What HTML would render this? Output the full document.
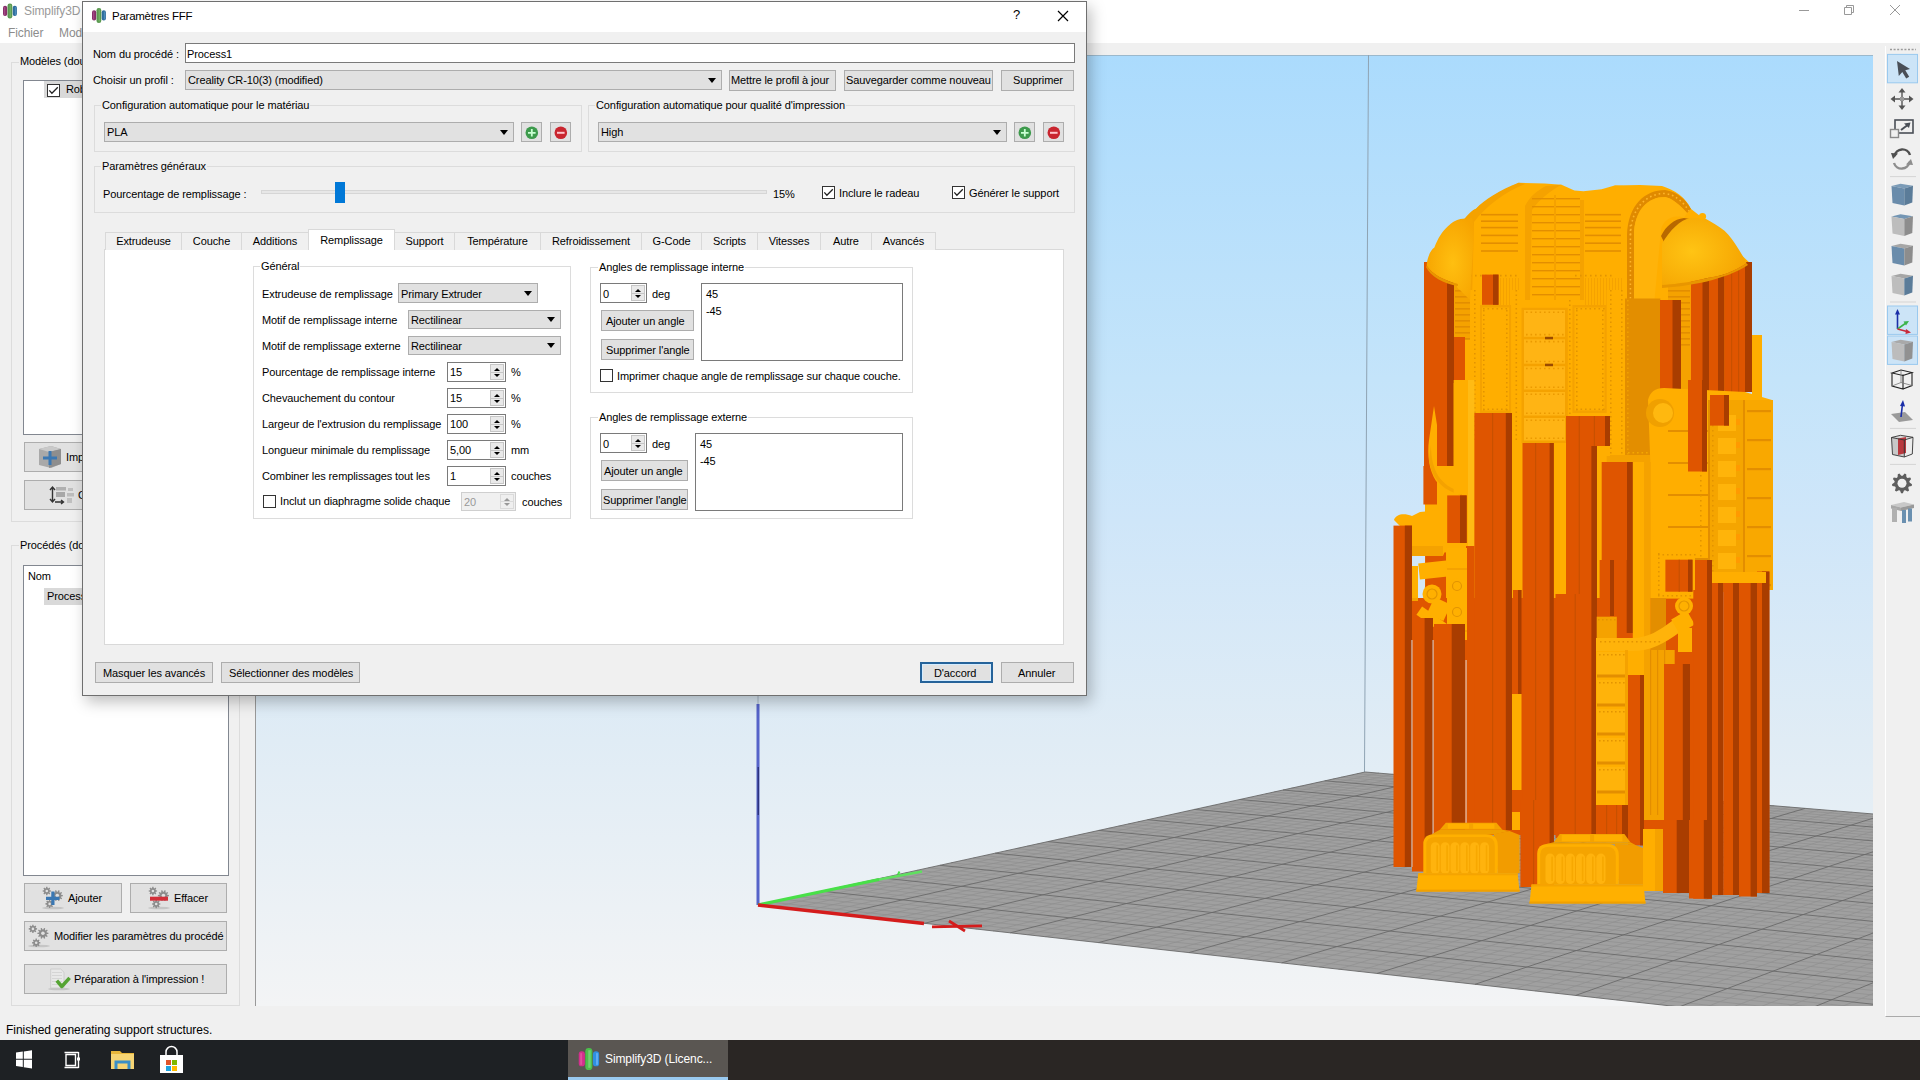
<!DOCTYPE html>
<html><head><meta charset="utf-8">
<style>
*{box-sizing:border-box;margin:0;padding:0}
html,body{width:1920px;height:1080px;overflow:hidden;background:#f0f0f0;font-family:"Liberation Sans",sans-serif;font-size:11px;letter-spacing:-0.1px;color:#000}
.a{position:absolute}
.t{position:absolute;white-space:nowrap;line-height:14px}
.btn{position:absolute;background:#e1e1e1;border:1px solid #adadad;text-align:center;white-space:nowrap}
.cmb{position:absolute;background:#e1e1e1;border:1px solid #adadad;white-space:nowrap}
.inp{position:absolute;background:#fff;border:1px solid #7a7a7a;white-space:nowrap}
.grp{position:absolute;border:1px solid #dcdcdc}
.arr{position:absolute;width:0;height:0;border-left:4px solid transparent;border-right:4px solid transparent;border-top:5px solid #000}
.chk{position:absolute;width:13px;height:13px;border:1px solid #333;background:#fff}
.spin{position:absolute;background:#fff;border:1px solid #7a7a7a}
.spin .ud{position:absolute;right:1px;top:1px;bottom:1px;width:14px;background:#e9e9e9;border:1px solid #c6c6c6}
.spin .ud:before{content:"";position:absolute;left:3px;top:2.5px;border-left:3px solid transparent;border-right:3px solid transparent;border-bottom:3.5px solid #000}
.spin .ud:after{content:"";position:absolute;left:3px;bottom:2.5px;border-left:3px solid transparent;border-right:3px solid transparent;border-top:3.5px solid #000}
.spin .ud i{position:absolute;left:0;right:0;top:50%;margin-top:-0.5px;height:1px;background:#c6c6c6}
.spin.dis .ud:before{border-bottom-color:#999}.spin.dis .ud:after{border-top-color:#999}
.ck svg{position:absolute;left:-1px;top:-1px}
.pm{}
.dot{position:absolute;left:4px;top:3px;width:12px;height:12px;border-radius:50%}
.dot.g{background:#3cb043}
.dot.r{background:#e02020}
.lb{position:absolute;background:#fff;border:1px solid #828790}
</style></head>
<body>
<!-- ===== main window ===== -->
<div class="a" style="left:0;top:0;width:1920px;height:43px;background:#fff"></div>
<div class="t" style="left:24px;top:4px;font-size:12px;color:#999">Simplify3D</div>
<div class="t" style="left:8px;top:26px;font-size:12px;color:#8c8c8c">Fichier</div>
<div class="t" style="left:59px;top:26px;font-size:12px;color:#8c8c8c">Mod</div>
<svg class="a" style="left:3px;top:3px" width="14" height="16" viewBox="0 0 14 15">
<rect x="0" y="2.3" width="4.2" height="10.2" rx="2" fill="#86306a"/><rect x="1" y="3.5" width="1.3" height="8" fill="#c060a0" opacity="0.5"/>
<rect x="9.7" y="2.3" width="4.2" height="10.2" rx="2" fill="#2e6d9c"/><rect x="11.8" y="3.5" width="1.3" height="8" fill="#60a0d0" opacity="0.6"/>
<rect x="4.5" y="0" width="4.8" height="15" rx="2.3" fill="#5a9850"/><rect x="6.5" y="1.5" width="1.6" height="12" fill="#80c070" opacity="0.6"/>
</svg>
<svg class="a" style="left:1795px;top:3px" width="110" height="16"><path d="M4 7.5h10" stroke="#999" stroke-width="1"/><path d="M49.5 4.5h7v7h-7zM51.5 4.5v-2h7v7h-2" stroke="#999" fill="none" stroke-width="1"/><path d="M95 2l10 10M105 2l-10 10" stroke="#999" stroke-width="1"/></svg>

<!-- left panel -->
<div class="grp" style="left:11px;top:62px;width:229px;height:460px"></div>
<div class="t" style="left:19px;top:54px;background:#f0f0f0;padding:0 1px">Modèles (double-clic)</div>
<div class="lb" style="left:23px;top:80px;width:206px;height:355px"></div>
<div class="a" style="left:44px;top:81px;width:180px;height:17px;background:#d9d9d9"></div>
<div class="chk ck" style="left:47px;top:84px"><svg width="13" height="13"><path d="M2.3 6.4L4.9 9.2L10.8 3.3" stroke="#222" stroke-width="1.3" fill="none"/></svg></div>
<div class="t" style="left:66px;top:82px">Robot</div>
<div class="btn" style="left:24px;top:442px;width:204px;height:30px"></div>
<div class="btn" style="left:24px;top:480px;width:204px;height:30px"></div>
<div class="t" style="left:66px;top:450px">Importer</div>
<div class="t" style="left:78px;top:488px">Centrer et arranger</div>

<div class="grp" style="left:11px;top:545px;width:229px;height:461px"></div>
<div class="t" style="left:19px;top:538px;background:#f0f0f0;padding:0 1px">Procédés (double-clic)</div>
<div class="lb" style="left:23px;top:565px;width:206px;height:311px"></div>
<div class="t" style="left:28px;top:569px">Nom</div>
<div class="a" style="left:44px;top:588px;width:180px;height:17px;background:#d9d9d9"></div>
<div class="t" style="left:47px;top:589px">Process1</div>
<div class="btn" style="left:24px;top:883px;width:98px;height:30px"></div>
<div class="t" style="left:68px;top:891px">Ajouter</div>
<div class="btn" style="left:130px;top:883px;width:97px;height:30px"></div>
<div class="t" style="left:174px;top:891px">Effacer</div>
<div class="btn" style="left:24px;top:921px;width:203px;height:30px"></div>
<div class="t" style="left:54px;top:929px">Modifier les paramètres du procédé</div>
<div class="btn" style="left:24px;top:964px;width:203px;height:30px"></div>
<div class="t" style="left:74px;top:972px">Préparation à l'impression !</div>

<svg class="a" style="left:0;top:0" width="260" height="1010"><ellipse cx="53.0" cy="908.0" rx="11" ry="1.3" fill="#000" opacity="0.12"/><ellipse cx="159.0" cy="908.0" rx="11" ry="1.3" fill="#000" opacity="0.12"/><ellipse cx="39.0" cy="946.0" rx="11" ry="1.3" fill="#000" opacity="0.12"/><ellipse cx="59.0" cy="989.0" rx="11" ry="1.3" fill="#000" opacity="0.12"/><polygon points="51.0,890.4 51.0,891.6 49.7,891.8 49.4,892.5 50.2,893.5 49.3,894.4 48.3,893.6 47.6,893.9 47.4,895.2 46.2,895.2 46.0,893.9 45.3,893.6 44.3,894.4 43.4,893.5 44.2,892.5 43.9,891.8 42.6,891.6 42.6,890.4 43.9,890.2 44.2,889.5 43.4,888.5 44.3,887.6 45.3,888.4 46.0,888.1 46.2,886.8 47.4,886.8 47.6,888.1 48.3,888.4 49.3,887.6 50.2,888.5 49.4,889.5 49.7,890.2" fill="#8c8c8c"/><circle cx="46.8" cy="891.0" r="1.3" fill="#e1e1e1"/><polygon points="62.8,895.0 62.8,896.2 61.2,896.4 60.9,897.2 62.1,898.3 61.4,899.3 60.0,898.5 59.3,899.0 59.6,900.6 58.4,901.0 57.7,899.5 56.9,899.5 56.2,901.0 55.0,900.6 55.3,899.0 54.6,898.5 53.2,899.3 52.5,898.3 53.7,897.2 53.4,896.4 51.8,896.2 51.8,895.0 53.4,894.8 53.7,894.0 52.5,892.9 53.2,891.9 54.6,892.7 55.3,892.2 55.0,890.6 56.2,890.2 56.9,891.7 57.7,891.7 58.4,890.2 59.6,890.6 59.3,892.2 60.0,892.7 61.4,891.9 62.1,892.9 60.9,894.0 61.2,894.8" fill="#8c8c8c"/><circle cx="57.3" cy="895.6" r="1.8" fill="#e1e1e1"/><polygon points="53.8,903.3 53.8,904.5 52.5,904.7 52.2,905.4 53.0,906.4 52.1,907.3 51.1,906.5 50.4,906.8 50.2,908.1 49.0,908.1 48.8,906.8 48.1,906.5 47.1,907.3 46.2,906.4 47.0,905.4 46.7,904.7 45.4,904.5 45.4,903.3 46.7,903.1 47.0,902.4 46.2,901.4 47.1,900.5 48.1,901.3 48.8,901.0 49.0,899.7 50.2,899.7 50.4,901.0 51.1,901.3 52.1,900.5 53.0,901.4 52.2,902.4 52.5,903.1" fill="#8c8c8c"/><circle cx="49.6" cy="903.9" r="1.3" fill="#e1e1e1"/><path d="M52.9 891.5v13.5M46 898.3h13.5" stroke="#3b78b3" stroke-width="3.2"/><polygon points="157.1,890.4 157.1,891.6 155.8,891.8 155.5,892.5 156.3,893.5 155.4,894.4 154.4,893.6 153.7,893.9 153.5,895.2 152.3,895.2 152.1,893.9 151.4,893.6 150.4,894.4 149.5,893.5 150.3,892.5 150.0,891.8 148.7,891.6 148.7,890.4 150.0,890.2 150.3,889.5 149.5,888.5 150.4,887.6 151.4,888.4 152.1,888.1 152.3,886.8 153.5,886.8 153.7,888.1 154.4,888.4 155.4,887.6 156.3,888.5 155.5,889.5 155.8,890.2" fill="#8c8c8c"/><circle cx="152.9" cy="891.0" r="1.3" fill="#e1e1e1"/><polygon points="168.9,895.0 168.9,896.2 167.3,896.4 167.0,897.2 168.2,898.3 167.5,899.3 166.1,898.5 165.4,899.0 165.7,900.6 164.5,901.0 163.8,899.5 163.0,899.5 162.3,901.0 161.1,900.6 161.4,899.0 160.7,898.5 159.3,899.3 158.6,898.3 159.8,897.2 159.5,896.4 157.9,896.2 157.9,895.0 159.5,894.8 159.8,894.0 158.6,892.9 159.3,891.9 160.7,892.7 161.4,892.2 161.1,890.6 162.3,890.2 163.0,891.7 163.8,891.7 164.5,890.2 165.7,890.6 165.4,892.2 166.1,892.7 167.5,891.9 168.2,892.9 167.0,894.0 167.3,894.8" fill="#8c8c8c"/><circle cx="163.4" cy="895.6" r="1.8" fill="#e1e1e1"/><polygon points="160.4,903.4 160.4,904.6 159.1,904.8 158.8,905.5 159.6,906.5 158.7,907.4 157.7,906.6 157.0,906.9 156.8,908.2 155.6,908.2 155.4,906.9 154.7,906.6 153.7,907.4 152.8,906.5 153.6,905.5 153.3,904.8 152.0,904.6 152.0,903.4 153.3,903.2 153.6,902.5 152.8,901.5 153.7,900.6 154.7,901.4 155.4,901.1 155.6,899.8 156.8,899.8 157.0,901.1 157.7,901.4 158.7,900.6 159.6,901.5 158.8,902.5 159.1,903.2" fill="#8c8c8c"/><circle cx="156.2" cy="904.0" r="1.3" fill="#e1e1e1"/><rect x="150" y="896.7" width="18" height="4" fill="#d2303a"/><polygon points="37.1,928.3 37.1,929.5 35.8,929.7 35.5,930.4 36.3,931.4 35.4,932.3 34.4,931.5 33.7,931.8 33.5,933.1 32.3,933.1 32.1,931.8 31.4,931.5 30.4,932.3 29.5,931.4 30.3,930.4 30.0,929.7 28.7,929.5 28.7,928.3 30.0,928.1 30.3,927.4 29.5,926.4 30.4,925.5 31.4,926.3 32.1,926.0 32.3,924.7 33.5,924.7 33.7,926.0 34.4,926.3 35.4,925.5 36.3,926.4 35.5,927.4 35.8,928.1" fill="#8c8c8c"/><circle cx="32.9" cy="928.9" r="1.3" fill="#e1e1e1"/><polygon points="48.4,932.7 48.4,933.9 46.8,934.1 46.5,934.9 47.7,936.0 47.0,937.0 45.6,936.2 44.9,936.7 45.2,938.3 44.0,938.7 43.3,937.2 42.5,937.2 41.8,938.7 40.6,938.3 40.9,936.7 40.2,936.2 38.8,937.0 38.1,936.0 39.3,934.9 39.0,934.1 37.4,933.9 37.4,932.7 39.0,932.5 39.3,931.7 38.1,930.6 38.8,929.6 40.2,930.4 40.9,929.9 40.6,928.3 41.8,927.9 42.5,929.4 43.3,929.4 44.0,927.9 45.2,928.3 44.9,929.9 45.6,930.4 47.0,929.6 47.7,930.6 46.5,931.7 46.8,932.5" fill="#8c8c8c"/><circle cx="42.9" cy="933.3" r="1.8" fill="#e1e1e1"/><polygon points="40.4,942.2 40.4,943.4 39.1,943.6 38.8,944.3 39.6,945.3 38.7,946.2 37.7,945.4 37.0,945.7 36.8,947.0 35.6,947.0 35.4,945.7 34.7,945.4 33.7,946.2 32.8,945.3 33.6,944.3 33.3,943.6 32.0,943.4 32.0,942.2 33.3,942.0 33.6,941.3 32.8,940.3 33.7,939.4 34.7,940.2 35.4,939.9 35.6,938.6 36.8,938.6 37.0,939.9 37.7,940.2 38.7,939.4 39.6,940.3 38.8,941.3 39.1,942.0" fill="#8c8c8c"/><circle cx="36.2" cy="942.8" r="1.3" fill="#e1e1e1"/><path d="M50.7 969h10l3.3 3.3V988H50.7z" fill="#e8e8e8" stroke="#c8c8c8" stroke-width="0.8"/><path d="M52 972.5h10" stroke="#cfcfcf" stroke-width="0.8"/><path d="M52 975.5h10" stroke="#cfcfcf" stroke-width="0.8"/><path d="M52 978.5h10" stroke="#cfcfcf" stroke-width="0.8"/><path d="M52 981.5h10" stroke="#cfcfcf" stroke-width="0.8"/><path d="M52 984.5h10" stroke="#cfcfcf" stroke-width="0.8"/><path d="M56.8 980.6L61.8 986.5L69.6 977.8" stroke="#55a433" stroke-width="3.5" fill="none" stroke-linejoin="round"/><path d="M39 449l12-3 10 3v15l-10 4-12-3z" fill="#a9a9a9"/><path d="M39 449l10 3 12-3-10-3z" fill="#c9c9c9"/><path d="M49 452v16l12-4V449z" fill="#8e8e8e"/><path d="M50 451v14M43 458h14" stroke="#3b78b3" stroke-width="3"/><path d="M52.5 487v15M50 490l2.5-3 2.5 3M50 499l2.5 3 2.5-3" stroke="#333" stroke-width="1.4" fill="none"/><rect x="56" y="487" width="10" height="3.5" fill="#b0b0b0"/><rect x="56" y="492" width="9" height="5" fill="#a8a8a8"/><rect x="68" y="488" width="5" height="3" fill="#c0c0c0"/><rect x="67" y="493" width="7" height="3.5" fill="#bdbdbd"/><rect x="67" y="498" width="5" height="5" fill="#c0c0c0"/><path d="M55 502h8M61 500l2.5 2-2.5 2" stroke="#333" stroke-width="1.4" fill="none"/></svg>
<!-- viewport -->
<div id="vp" class="a" style="left:255px;top:55px;width:1618px;height:951px;background:linear-gradient(#abdbfd,#c4e4fa 34%,#cfe6f9 49%,#e0ecf5 72%,#f3f4f5);border-left:1px solid #999;border-top:1px solid #9bb8cc"></div>

<!--SCENE--><svg class="a" style="left:0;top:0" width="1920" height="1080" viewBox="0 0 1920 1080">
<defs><clipPath id="vpc"><rect x="256" y="55" width="1617" height="951"/></clipPath></defs>
<g clip-path="url(#vpc)">
<line x1="1368.5" y1="55" x2="1364.5" y2="772" stroke="#8fa3b3" stroke-width="1"/>
<polygon points="759.0,905.0 1365.1,772.0 2520.7,867.5 2171.6,1061.4" fill="#a0a0a0"/>
<path d="M775.2 906.8L1378.9 773.1M791.4 908.6L1392.8 774.3M807.8 910.4L1406.8 775.4M824.2 912.2L1420.8 776.6M857.3 915.9L1448.9 778.9M873.9 917.7L1463.1 780.1M890.7 919.6L1477.3 781.3M907.5 921.4L1491.6 782.4M941.4 925.2L1520.4 784.8M958.5 927.1L1534.8 786.0M975.7 929.0L1549.3 787.2M993.0 930.9L1563.9 788.4M1027.8 934.7L1593.2 790.8M1045.3 936.7L1607.9 792.1M1062.9 938.6L1622.7 793.3M1080.6 940.6L1637.6 794.5M1116.3 944.6L1667.5 797.0M1134.3 946.5L1682.5 798.2M1152.4 948.5L1697.6 799.5M1170.6 950.6L1712.8 800.7M1207.2 954.6L1743.3 803.2M1225.7 956.7L1758.7 804.5M1244.3 958.7L1774.1 805.8M1262.9 960.8L1789.5 807.1M1300.6 964.9L1820.7 809.6M1319.5 967.0L1836.3 810.9M1338.6 969.2L1852.1 812.2M1357.8 971.3L1867.9 813.6M1396.4 975.6L1899.7 816.2M1415.9 977.7L1915.7 817.5M1435.5 979.9L1931.7 818.8M1455.2 982.1L1947.8 820.2M1494.9 986.5L1980.3 822.8M1515.0 988.7L1996.6 824.2M1535.1 990.9L2013.0 825.6M1555.3 993.1L2029.5 826.9M1596.2 997.7L2062.7 829.7M1616.8 999.9L2079.3 831.0M1637.5 1002.2L2096.1 832.4M1658.3 1004.5L2112.9 833.8M1700.3 1009.2L2146.8 836.6M1721.4 1011.5L2163.8 838.0M1742.7 1013.9L2180.9 839.4M1764.1 1016.3L2198.1 840.9M1807.3 1021.0L2232.7 843.7M1829.1 1023.4L2250.1 845.2M1851.0 1025.9L2267.6 846.6M1873.1 1028.3L2285.2 848.1M1917.5 1033.2L2320.5 851.0M1939.9 1035.7L2338.3 852.5M1962.5 1038.2L2356.2 853.9M1985.2 1040.7L2374.2 855.4M2030.9 1045.8L2410.3 858.4M2054.0 1048.3L2428.5 859.9M2077.3 1050.9L2446.8 861.4M2100.6 1053.5L2465.1 862.9M2147.8 1058.7L2502.1 866.0M2171.6 1061.4L2520.7 867.5M771.8 902.2L2179.3 1057.1M784.5 899.4L2186.9 1052.8M797.1 896.6L2194.5 1048.6M809.6 893.9L2202.0 1044.5M834.3 888.5L2216.7 1036.3M846.4 885.8L2223.9 1032.3M858.5 883.2L2231.1 1028.3M870.4 880.6L2238.1 1024.4M894.0 875.4L2252.1 1016.6M905.6 872.8L2258.9 1012.8M917.1 870.3L2265.7 1009.1M928.5 867.8L2272.5 1005.3M951.1 862.8L2285.7 998.0M962.2 860.4L2292.2 994.4M973.3 858.0L2298.6 990.8M984.2 855.6L2305.0 987.3M1005.8 850.8L2317.6 980.3M1016.5 848.5L2323.8 976.8M1027.1 846.2L2329.9 973.4M1037.6 843.9L2336.0 970.1M1058.3 839.3L2348.0 963.4M1068.6 837.1L2353.9 960.1M1078.7 834.8L2359.7 956.9M1088.8 832.6L2365.5 953.7M1108.7 828.2L2376.9 947.4M1118.5 826.1L2382.5 944.2M1128.3 823.9L2388.1 941.2M1138.0 821.8L2393.6 938.1M1157.1 817.6L2404.4 932.1M1166.5 815.6L2409.8 929.1M1175.9 813.5L2415.1 926.1M1185.2 811.5L2420.4 923.2M1203.6 807.4L2430.7 917.5M1212.7 805.4L2435.9 914.6M1221.7 803.4L2440.9 911.8M1230.7 801.5L2446.0 909.0M1248.4 797.6L2455.9 903.5M1257.1 795.7L2460.8 900.8M1265.8 793.8L2465.6 898.1M1274.4 791.9L2470.4 895.4M1291.4 788.1L2479.9 890.1M1299.9 786.3L2484.6 887.5M1308.2 784.5L2489.3 885.0M1316.5 782.6L2493.9 882.4M1332.9 779.0L2503.0 877.4M1341.1 777.2L2507.4 874.9M1349.1 775.5L2511.9 872.4M1357.1 773.7L2516.3 870.0" stroke="#8f8f8f" stroke-width="0.7" fill="none"/>
<path d="M759.0 905.0L1365.1 772.0M840.7 914.0L1434.8 777.7M924.4 923.3L1506.0 783.6M1010.3 932.8L1578.5 789.6M1098.4 942.6L1652.5 795.7M1188.9 952.6L1728.0 802.0M1281.7 962.9L1805.1 808.4M1377.1 973.4L1883.7 814.9M1475.0 984.3L1964.0 821.5M1575.7 995.4L2046.0 828.3M1679.2 1006.9L2129.8 835.2M1785.7 1018.6L2215.4 842.3M1895.2 1030.8L2302.8 849.5M2008.0 1043.2L2392.2 856.9M2124.1 1056.1L2483.6 864.5M759.0 905.0L2171.6 1061.4M822.0 891.2L2209.4 1040.4M882.2 878.0L2245.2 1020.5M939.9 865.3L2279.1 1001.6M995.1 853.2L2311.3 983.7M1048.0 841.6L2342.0 966.7M1098.8 830.4L2371.2 950.5M1147.6 819.7L2399.0 935.1M1194.4 809.4L2425.6 920.3M1239.5 799.5L2451.0 906.2M1283.0 790.0L2475.2 892.8M1324.8 780.8L2498.4 879.9M1365.1 772.0L2520.7 867.5" stroke="#6a6a6a" stroke-width="0.9" fill="none"/>
<line x1="758" y1="704" x2="758" y2="905" stroke="#5563c9" stroke-width="3"/>
<line x1="758.2" y1="767" x2="758.2" y2="815" stroke="#1c1f5c" stroke-width="1"/><line x1="758" y1="695" x2="758" y2="704" stroke="#a8b8c8" stroke-width="1"/>
<path d="M758 905L879 879.5" stroke="#48e048" stroke-width="3.2"/><path d="M879 879.5L922 871.5" stroke="#5fe05f" stroke-width="2.4"/><path d="M898 874.5l1.5 -3" stroke="#48e048" stroke-width="2"/>
<line x1="758" y1="905" x2="924" y2="923.5" stroke="#d41c1c" stroke-width="3.5"/>
<path d="M932 926.8L982 925.8M949 921L965 931" stroke="#d41c1c" stroke-width="2.8"/>
</g>
<g id="robot">
<defs><radialGradient id="domeL" cx="0.55" cy="0.55" r="0.6"><stop offset="0" stop-color="#ffbf10"/><stop offset="1" stop-color="#f7a400"/></radialGradient><radialGradient id="domeR" cx="0.35" cy="0.5" r="0.7"><stop offset="0" stop-color="#ffc414"/><stop offset="1" stop-color="#f5a300"/></radialGradient></defs>
<path d="M1462 300 L1462 222 L1476 208.7 L1492.8 195.7 L1518.7 182.8 L1544.6 183.4 L1561.5 184.7 L1574.4 190.6 L1583.5 191.2 L1601.6 189.3 L1614.6 185.4 L1640 185 L1662 186 C1675 190 1686 198 1690.8 208.7 L1700 216 L1752 265 L1752 390 L1660 390 L1660 600 L1425 600 L1425 300 Z" fill="#ffae00"/>
<rect x="1412.0" y="598.0" width="288.0" height="237.0" fill="#df5500"/>
<path d="M1462 300 L1462 222 C1468 214 1472 210 1476 208.7 C1484 200 1500 190 1518.7 182.8 L1525 184 C1505 192 1486 206 1474 222 L1472 300 Z" fill="#f5a200"/>
<path d="M1525 206 C1530 196 1538 190 1546 186 L1561.5 184.7 C1552 190 1540 198 1532 210 L1530 300 L1525 300 Z" fill="#f5a200"/>
<rect x="1580.0" y="200.0" width="4.0" height="100.0" fill="#f5a200"/>
<path d="M1614.6 185.4 C1640 186 1662 190 1690.8 208.7 L1693 214 L1665 206 L1634 204 L1627 210 L1627 300 L1617 300 L1617 200 Z" fill="#ffae00"/>
<path d="M1627 300 L1627 235 C1628 205 1645 190 1665 190 C1678 192 1686 200 1691 209 L1687 213 C1680 205 1672 198 1665 197 C1648 197 1634 210 1634 236 L1634 300 Z" fill="#e08a00"/>
<path d="M1634 300 L1634 236 C1634 210 1648 197 1665 197 C1672 198 1680 205 1687 213 L1684 218 C1672 213 1662 222 1661 230 L1654.5 300 Z" fill="#ffb30a"/>
<path d="M1661 236 C1666 226 1674 219 1684 218 L1690 219 C1680 225 1672 235 1668 250 Z" fill="#b86800"/>
<path d="M1629.6 225.0h1.6v1.6h-1.6zM1629.6 229.5h1.6v1.6h-1.6zM1629.6 234.0h1.6v1.6h-1.6zM1629.6 238.5h1.6v1.6h-1.6zM1629.6 243.0h1.6v1.6h-1.6zM1629.6 247.5h1.6v1.6h-1.6zM1629.6 252.0h1.6v1.6h-1.6zM1629.6 256.5h1.6v1.6h-1.6zM1629.6 261.0h1.6v1.6h-1.6zM1629.6 265.5h1.6v1.6h-1.6zM1629.6 270.0h1.6v1.6h-1.6zM1629.6 274.5h1.6v1.6h-1.6zM1629.6 279.0h1.6v1.6h-1.6zM1629.6 283.5h1.6v1.6h-1.6zM1629.6 288.0h1.6v1.6h-1.6zM1629.6 292.5h1.6v1.6h-1.6zM1629.6 297.0h1.6v1.6h-1.6z" fill="#ffb62a"/>
<path d="M1630.5 235 C1631 207 1647 193.5 1665 193.5 C1676 195 1683 202 1689 211" fill="none" stroke="#ffb62a" stroke-width="1.6" stroke-dasharray="1.6 2.9"/>
<path d="M1470.0 274.8h1.6v1.6h-1.6zM1475.0 274.8h1.6v1.6h-1.6zM1480.0 274.8h1.6v1.6h-1.6zM1485.0 274.8h1.6v1.6h-1.6zM1490.0 274.8h1.6v1.6h-1.6zM1495.0 274.8h1.6v1.6h-1.6zM1500.0 274.8h1.6v1.6h-1.6zM1505.0 274.8h1.6v1.6h-1.6zM1510.0 274.8h1.6v1.6h-1.6zM1515.0 274.8h1.6v1.6h-1.6z" fill="#e39400"/>
<path d="M1575.0 274.8h1.6v1.6h-1.6zM1580.0 274.8h1.6v1.6h-1.6zM1585.0 274.8h1.6v1.6h-1.6zM1590.0 274.8h1.6v1.6h-1.6zM1595.0 274.8h1.6v1.6h-1.6zM1600.0 274.8h1.6v1.6h-1.6zM1605.0 274.8h1.6v1.6h-1.6zM1610.0 274.8h1.6v1.6h-1.6z" fill="#e39400"/>
<rect x="1481.0" y="213.9" width="37.0" height="1.6" fill="#e38e00"/>
<rect x="1481.0" y="220.4" width="37.0" height="1.6" fill="#e38e00"/>
<rect x="1481.0" y="226.8" width="37.0" height="1.6" fill="#e38e00"/>
<rect x="1481.0" y="234.6" width="37.0" height="1.6" fill="#e38e00"/>
<rect x="1481.0" y="242.4" width="37.0" height="1.6" fill="#e38e00"/>
<rect x="1481.0" y="250.2" width="37.0" height="1.6" fill="#e38e00"/>
<rect x="1585.0" y="213.9" width="36.0" height="1.6" fill="#e38e00"/>
<rect x="1585.0" y="220.4" width="36.0" height="1.6" fill="#e38e00"/>
<rect x="1585.0" y="226.8" width="36.0" height="1.6" fill="#e38e00"/>
<rect x="1585.0" y="234.6" width="36.0" height="1.6" fill="#e38e00"/>
<rect x="1585.0" y="242.4" width="36.0" height="1.6" fill="#e38e00"/>
<rect x="1585.0" y="250.2" width="36.0" height="1.6" fill="#e38e00"/>
<rect x="1532.0" y="198.0" width="48.0" height="1.4" fill="#e38e00"/>
<rect x="1532.0" y="206.0" width="48.0" height="1.4" fill="#e38e00"/>
<rect x="1532.0" y="214.0" width="48.0" height="1.4" fill="#e38e00"/>
<rect x="1532.0" y="222.0" width="48.0" height="1.4" fill="#e38e00"/>
<rect x="1532.0" y="230.0" width="48.0" height="1.4" fill="#e38e00"/>
<rect x="1532.0" y="238.0" width="48.0" height="1.4" fill="#e38e00"/>
<rect x="1532.0" y="246.0" width="48.0" height="1.4" fill="#e38e00"/>
<rect x="1532.0" y="254.0" width="48.0" height="1.4" fill="#e38e00"/>
<rect x="1532.0" y="262.0" width="48.0" height="1.4" fill="#e38e00"/>
<rect x="1532.0" y="270.0" width="48.0" height="1.4" fill="#e38e00"/>
<rect x="1532.0" y="278.0" width="48.0" height="1.4" fill="#e38e00"/>
<rect x="1532.0" y="286.0" width="48.0" height="1.4" fill="#e38e00"/>
<rect x="1532.0" y="294.0" width="48.0" height="1.4" fill="#e38e00"/>
<rect x="1554.0" y="195.0" width="2.0" height="105.0" fill="#f5a200"/>
<rect x="1500.0" y="278.0" width="1.0" height="27.0" fill="#f5a200"/>
<rect x="1503.0" y="278.0" width="1.0" height="27.0" fill="#f5a200"/>
<rect x="1506.0" y="278.0" width="1.0" height="27.0" fill="#f5a200"/>
<rect x="1509.0" y="278.0" width="1.0" height="27.0" fill="#f5a200"/>
<rect x="1512.0" y="278.0" width="1.0" height="27.0" fill="#f5a200"/>
<rect x="1515.0" y="278.0" width="1.0" height="27.0" fill="#f5a200"/>
<rect x="1518.0" y="278.0" width="1.0" height="27.0" fill="#f5a200"/>
<rect x="1585.0" y="278.0" width="1.0" height="27.0" fill="#f5a200"/>
<rect x="1588.0" y="278.0" width="1.0" height="27.0" fill="#f5a200"/>
<rect x="1591.0" y="278.0" width="1.0" height="27.0" fill="#f5a200"/>
<rect x="1594.0" y="278.0" width="1.0" height="27.0" fill="#f5a200"/>
<rect x="1597.0" y="278.0" width="1.0" height="27.0" fill="#f5a200"/>
<rect x="1600.0" y="278.0" width="1.0" height="27.0" fill="#f5a200"/>
<rect x="1603.0" y="278.0" width="1.0" height="27.0" fill="#f5a200"/>
<rect x="1606.0" y="278.0" width="1.0" height="27.0" fill="#f5a200"/>
<rect x="1609.0" y="278.0" width="1.0" height="27.0" fill="#f5a200"/>
<rect x="1612.0" y="278.0" width="1.0" height="27.0" fill="#f5a200"/>
<rect x="1615.0" y="278.0" width="1.0" height="27.0" fill="#f5a200"/>
<rect x="1618.0" y="278.0" width="1.0" height="27.0" fill="#f5a200"/>
<rect x="1621.0" y="278.0" width="1.0" height="27.0" fill="#f5a200"/>
<rect x="1479.8" y="305.0" width="31.5" height="108.0" fill="#f5a200"/>
<rect x="1482.0" y="307.5" width="27.0" height="103.0" fill="#ffae00"/>
<path d="M1483.0 310.0h1.6v1.6h-1.6zM1483.0 314.5h1.6v1.6h-1.6zM1483.0 319.0h1.6v1.6h-1.6zM1483.0 323.5h1.6v1.6h-1.6zM1483.0 328.0h1.6v1.6h-1.6zM1483.0 332.5h1.6v1.6h-1.6zM1483.0 337.0h1.6v1.6h-1.6zM1483.0 341.5h1.6v1.6h-1.6zM1483.0 346.0h1.6v1.6h-1.6zM1483.0 350.5h1.6v1.6h-1.6zM1483.0 355.0h1.6v1.6h-1.6zM1483.0 359.5h1.6v1.6h-1.6zM1483.0 364.0h1.6v1.6h-1.6zM1483.0 368.5h1.6v1.6h-1.6zM1483.0 373.0h1.6v1.6h-1.6zM1483.0 377.5h1.6v1.6h-1.6zM1483.0 382.0h1.6v1.6h-1.6zM1483.0 386.5h1.6v1.6h-1.6zM1483.0 391.0h1.6v1.6h-1.6zM1483.0 395.5h1.6v1.6h-1.6zM1483.0 400.0h1.6v1.6h-1.6zM1483.0 404.5h1.6v1.6h-1.6zM1483.0 409.0h1.6v1.6h-1.6z" fill="#e39400"/>
<path d="M1506.0 310.0h1.6v1.6h-1.6zM1506.0 314.5h1.6v1.6h-1.6zM1506.0 319.0h1.6v1.6h-1.6zM1506.0 323.5h1.6v1.6h-1.6zM1506.0 328.0h1.6v1.6h-1.6zM1506.0 332.5h1.6v1.6h-1.6zM1506.0 337.0h1.6v1.6h-1.6zM1506.0 341.5h1.6v1.6h-1.6zM1506.0 346.0h1.6v1.6h-1.6zM1506.0 350.5h1.6v1.6h-1.6zM1506.0 355.0h1.6v1.6h-1.6zM1506.0 359.5h1.6v1.6h-1.6zM1506.0 364.0h1.6v1.6h-1.6zM1506.0 368.5h1.6v1.6h-1.6zM1506.0 373.0h1.6v1.6h-1.6zM1506.0 377.5h1.6v1.6h-1.6zM1506.0 382.0h1.6v1.6h-1.6zM1506.0 386.5h1.6v1.6h-1.6zM1506.0 391.0h1.6v1.6h-1.6zM1506.0 395.5h1.6v1.6h-1.6zM1506.0 400.0h1.6v1.6h-1.6zM1506.0 404.5h1.6v1.6h-1.6zM1506.0 409.0h1.6v1.6h-1.6z" fill="#e39400"/>
<path d="M1483.0 308.0h1.6v1.6h-1.6zM1487.5 308.0h1.6v1.6h-1.6zM1492.0 308.0h1.6v1.6h-1.6zM1496.5 308.0h1.6v1.6h-1.6zM1501.0 308.0h1.6v1.6h-1.6zM1505.5 308.0h1.6v1.6h-1.6z" fill="#e39400"/>
<path d="M1483.0 408.5h1.6v1.6h-1.6zM1487.5 408.5h1.6v1.6h-1.6zM1492.0 408.5h1.6v1.6h-1.6zM1496.5 408.5h1.6v1.6h-1.6zM1501.0 408.5h1.6v1.6h-1.6zM1505.5 408.5h1.6v1.6h-1.6z" fill="#e39400"/>
<rect x="1511.3" y="290.0" width="10.2" height="153.0" fill="#ffae00"/>
<path d="M1515.5 290.0h1.6v1.6h-1.6zM1515.5 294.5h1.6v1.6h-1.6zM1515.5 299.0h1.6v1.6h-1.6zM1515.5 303.5h1.6v1.6h-1.6zM1515.5 308.0h1.6v1.6h-1.6zM1515.5 312.5h1.6v1.6h-1.6zM1515.5 317.0h1.6v1.6h-1.6zM1515.5 321.5h1.6v1.6h-1.6zM1515.5 326.0h1.6v1.6h-1.6zM1515.5 330.5h1.6v1.6h-1.6zM1515.5 335.0h1.6v1.6h-1.6zM1515.5 339.5h1.6v1.6h-1.6zM1515.5 344.0h1.6v1.6h-1.6zM1515.5 348.5h1.6v1.6h-1.6zM1515.5 353.0h1.6v1.6h-1.6zM1515.5 357.5h1.6v1.6h-1.6zM1515.5 362.0h1.6v1.6h-1.6zM1515.5 366.5h1.6v1.6h-1.6zM1515.5 371.0h1.6v1.6h-1.6zM1515.5 375.5h1.6v1.6h-1.6zM1515.5 380.0h1.6v1.6h-1.6zM1515.5 384.5h1.6v1.6h-1.6zM1515.5 389.0h1.6v1.6h-1.6zM1515.5 393.5h1.6v1.6h-1.6zM1515.5 398.0h1.6v1.6h-1.6zM1515.5 402.5h1.6v1.6h-1.6zM1515.5 407.0h1.6v1.6h-1.6zM1515.5 411.5h1.6v1.6h-1.6zM1515.5 416.0h1.6v1.6h-1.6zM1515.5 420.5h1.6v1.6h-1.6zM1515.5 425.0h1.6v1.6h-1.6zM1515.5 429.5h1.6v1.6h-1.6zM1515.5 434.0h1.6v1.6h-1.6zM1515.5 438.5h1.6v1.6h-1.6z" fill="#e39400"/>
<rect x="1567.8" y="300.0" width="4.6" height="143.0" fill="#ffae00"/>
<path d="M1569.0 300.0h1.6v1.6h-1.6zM1569.0 304.5h1.6v1.6h-1.6zM1569.0 309.0h1.6v1.6h-1.6zM1569.0 313.5h1.6v1.6h-1.6zM1569.0 318.0h1.6v1.6h-1.6zM1569.0 322.5h1.6v1.6h-1.6zM1569.0 327.0h1.6v1.6h-1.6zM1569.0 331.5h1.6v1.6h-1.6zM1569.0 336.0h1.6v1.6h-1.6zM1569.0 340.5h1.6v1.6h-1.6zM1569.0 345.0h1.6v1.6h-1.6zM1569.0 349.5h1.6v1.6h-1.6zM1569.0 354.0h1.6v1.6h-1.6zM1569.0 358.5h1.6v1.6h-1.6zM1569.0 363.0h1.6v1.6h-1.6zM1569.0 367.5h1.6v1.6h-1.6zM1569.0 372.0h1.6v1.6h-1.6zM1569.0 376.5h1.6v1.6h-1.6zM1569.0 381.0h1.6v1.6h-1.6zM1569.0 385.5h1.6v1.6h-1.6zM1569.0 390.0h1.6v1.6h-1.6zM1569.0 394.5h1.6v1.6h-1.6zM1569.0 399.0h1.6v1.6h-1.6zM1569.0 403.5h1.6v1.6h-1.6zM1569.0 408.0h1.6v1.6h-1.6zM1569.0 412.5h1.6v1.6h-1.6zM1569.0 417.0h1.6v1.6h-1.6zM1569.0 421.5h1.6v1.6h-1.6zM1569.0 426.0h1.6v1.6h-1.6zM1569.0 430.5h1.6v1.6h-1.6zM1569.0 435.0h1.6v1.6h-1.6zM1569.0 439.5h1.6v1.6h-1.6z" fill="#e39400"/>
<rect x="1606.7" y="290.0" width="18.3" height="166.0" fill="#ffae00"/>
<path d="M1610.0 290.0h1.6v1.6h-1.6zM1610.0 294.5h1.6v1.6h-1.6zM1610.0 299.0h1.6v1.6h-1.6zM1610.0 303.5h1.6v1.6h-1.6zM1610.0 308.0h1.6v1.6h-1.6zM1610.0 312.5h1.6v1.6h-1.6zM1610.0 317.0h1.6v1.6h-1.6zM1610.0 321.5h1.6v1.6h-1.6zM1610.0 326.0h1.6v1.6h-1.6zM1610.0 330.5h1.6v1.6h-1.6zM1610.0 335.0h1.6v1.6h-1.6zM1610.0 339.5h1.6v1.6h-1.6zM1610.0 344.0h1.6v1.6h-1.6zM1610.0 348.5h1.6v1.6h-1.6zM1610.0 353.0h1.6v1.6h-1.6zM1610.0 357.5h1.6v1.6h-1.6zM1610.0 362.0h1.6v1.6h-1.6zM1610.0 366.5h1.6v1.6h-1.6zM1610.0 371.0h1.6v1.6h-1.6zM1610.0 375.5h1.6v1.6h-1.6zM1610.0 380.0h1.6v1.6h-1.6zM1610.0 384.5h1.6v1.6h-1.6zM1610.0 389.0h1.6v1.6h-1.6zM1610.0 393.5h1.6v1.6h-1.6zM1610.0 398.0h1.6v1.6h-1.6zM1610.0 402.5h1.6v1.6h-1.6zM1610.0 407.0h1.6v1.6h-1.6zM1610.0 411.5h1.6v1.6h-1.6zM1610.0 416.0h1.6v1.6h-1.6zM1610.0 420.5h1.6v1.6h-1.6zM1610.0 425.0h1.6v1.6h-1.6zM1610.0 429.5h1.6v1.6h-1.6zM1610.0 434.0h1.6v1.6h-1.6zM1610.0 438.5h1.6v1.6h-1.6zM1610.0 443.0h1.6v1.6h-1.6zM1610.0 447.5h1.6v1.6h-1.6zM1610.0 452.0h1.6v1.6h-1.6z" fill="#e39400"/>
<path d="M1621.0 290.0h1.6v1.6h-1.6zM1621.0 294.5h1.6v1.6h-1.6zM1621.0 299.0h1.6v1.6h-1.6zM1621.0 303.5h1.6v1.6h-1.6zM1621.0 308.0h1.6v1.6h-1.6zM1621.0 312.5h1.6v1.6h-1.6zM1621.0 317.0h1.6v1.6h-1.6zM1621.0 321.5h1.6v1.6h-1.6zM1621.0 326.0h1.6v1.6h-1.6zM1621.0 330.5h1.6v1.6h-1.6zM1621.0 335.0h1.6v1.6h-1.6zM1621.0 339.5h1.6v1.6h-1.6zM1621.0 344.0h1.6v1.6h-1.6zM1621.0 348.5h1.6v1.6h-1.6zM1621.0 353.0h1.6v1.6h-1.6zM1621.0 357.5h1.6v1.6h-1.6zM1621.0 362.0h1.6v1.6h-1.6zM1621.0 366.5h1.6v1.6h-1.6zM1621.0 371.0h1.6v1.6h-1.6zM1621.0 375.5h1.6v1.6h-1.6zM1621.0 380.0h1.6v1.6h-1.6zM1621.0 384.5h1.6v1.6h-1.6zM1621.0 389.0h1.6v1.6h-1.6zM1621.0 393.5h1.6v1.6h-1.6zM1621.0 398.0h1.6v1.6h-1.6zM1621.0 402.5h1.6v1.6h-1.6zM1621.0 407.0h1.6v1.6h-1.6zM1621.0 411.5h1.6v1.6h-1.6zM1621.0 416.0h1.6v1.6h-1.6zM1621.0 420.5h1.6v1.6h-1.6zM1621.0 425.0h1.6v1.6h-1.6zM1621.0 429.5h1.6v1.6h-1.6zM1621.0 434.0h1.6v1.6h-1.6zM1621.0 438.5h1.6v1.6h-1.6zM1621.0 443.0h1.6v1.6h-1.6zM1621.0 447.5h1.6v1.6h-1.6zM1621.0 452.0h1.6v1.6h-1.6z" fill="#e39400"/>
<rect x="1470.0" y="290.0" width="9.8" height="170.0" fill="#ffae00"/>
<path d="M1474.0 290.0h1.6v1.6h-1.6zM1474.0 294.5h1.6v1.6h-1.6zM1474.0 299.0h1.6v1.6h-1.6zM1474.0 303.5h1.6v1.6h-1.6zM1474.0 308.0h1.6v1.6h-1.6zM1474.0 312.5h1.6v1.6h-1.6zM1474.0 317.0h1.6v1.6h-1.6zM1474.0 321.5h1.6v1.6h-1.6zM1474.0 326.0h1.6v1.6h-1.6zM1474.0 330.5h1.6v1.6h-1.6zM1474.0 335.0h1.6v1.6h-1.6zM1474.0 339.5h1.6v1.6h-1.6zM1474.0 344.0h1.6v1.6h-1.6zM1474.0 348.5h1.6v1.6h-1.6zM1474.0 353.0h1.6v1.6h-1.6zM1474.0 357.5h1.6v1.6h-1.6zM1474.0 362.0h1.6v1.6h-1.6zM1474.0 366.5h1.6v1.6h-1.6zM1474.0 371.0h1.6v1.6h-1.6zM1474.0 375.5h1.6v1.6h-1.6zM1474.0 380.0h1.6v1.6h-1.6zM1474.0 384.5h1.6v1.6h-1.6zM1474.0 389.0h1.6v1.6h-1.6zM1474.0 393.5h1.6v1.6h-1.6zM1474.0 398.0h1.6v1.6h-1.6zM1474.0 402.5h1.6v1.6h-1.6zM1474.0 407.0h1.6v1.6h-1.6zM1474.0 411.5h1.6v1.6h-1.6zM1474.0 416.0h1.6v1.6h-1.6zM1474.0 420.5h1.6v1.6h-1.6zM1474.0 425.0h1.6v1.6h-1.6zM1474.0 429.5h1.6v1.6h-1.6zM1474.0 434.0h1.6v1.6h-1.6zM1474.0 438.5h1.6v1.6h-1.6zM1474.0 443.0h1.6v1.6h-1.6zM1474.0 447.5h1.6v1.6h-1.6zM1474.0 452.0h1.6v1.6h-1.6zM1474.0 456.5h1.6v1.6h-1.6z" fill="#e39400"/>
<rect x="1521.5" y="307.8" width="46.3" height="135.2" fill="#f5a200"/>
<rect x="1524.0" y="310.0" width="41.0" height="26.8" fill="#ffb414"/>
<path d="M1526.0 311.5h1.6v1.6h-1.6zM1530.5 311.5h1.6v1.6h-1.6zM1535.0 311.5h1.6v1.6h-1.6zM1539.5 311.5h1.6v1.6h-1.6zM1544.0 311.5h1.6v1.6h-1.6zM1548.5 311.5h1.6v1.6h-1.6zM1553.0 311.5h1.6v1.6h-1.6zM1557.5 311.5h1.6v1.6h-1.6zM1562.0 311.5h1.6v1.6h-1.6z" fill="#eb9a00"/>
<path d="M1526.0 333.8h1.6v1.6h-1.6zM1530.5 333.8h1.6v1.6h-1.6zM1535.0 333.8h1.6v1.6h-1.6zM1539.5 333.8h1.6v1.6h-1.6zM1544.0 333.8h1.6v1.6h-1.6zM1548.5 333.8h1.6v1.6h-1.6zM1553.0 333.8h1.6v1.6h-1.6zM1557.5 333.8h1.6v1.6h-1.6zM1562.0 333.8h1.6v1.6h-1.6z" fill="#eb9a00"/>
<rect x="1524.0" y="339.3" width="41.0" height="24.4" fill="#ffb414"/>
<path d="M1526.0 340.8h1.6v1.6h-1.6zM1530.5 340.8h1.6v1.6h-1.6zM1535.0 340.8h1.6v1.6h-1.6zM1539.5 340.8h1.6v1.6h-1.6zM1544.0 340.8h1.6v1.6h-1.6zM1548.5 340.8h1.6v1.6h-1.6zM1553.0 340.8h1.6v1.6h-1.6zM1557.5 340.8h1.6v1.6h-1.6zM1562.0 340.8h1.6v1.6h-1.6z" fill="#eb9a00"/>
<path d="M1526.0 360.7h1.6v1.6h-1.6zM1530.5 360.7h1.6v1.6h-1.6zM1535.0 360.7h1.6v1.6h-1.6zM1539.5 360.7h1.6v1.6h-1.6zM1544.0 360.7h1.6v1.6h-1.6zM1548.5 360.7h1.6v1.6h-1.6zM1553.0 360.7h1.6v1.6h-1.6zM1557.5 360.7h1.6v1.6h-1.6zM1562.0 360.7h1.6v1.6h-1.6z" fill="#eb9a00"/>
<rect x="1524.0" y="366.2" width="41.0" height="23.3" fill="#ffb414"/>
<path d="M1526.0 367.7h1.6v1.6h-1.6zM1530.5 367.7h1.6v1.6h-1.6zM1535.0 367.7h1.6v1.6h-1.6zM1539.5 367.7h1.6v1.6h-1.6zM1544.0 367.7h1.6v1.6h-1.6zM1548.5 367.7h1.6v1.6h-1.6zM1553.0 367.7h1.6v1.6h-1.6zM1557.5 367.7h1.6v1.6h-1.6zM1562.0 367.7h1.6v1.6h-1.6z" fill="#eb9a00"/>
<path d="M1526.0 386.5h1.6v1.6h-1.6zM1530.5 386.5h1.6v1.6h-1.6zM1535.0 386.5h1.6v1.6h-1.6zM1539.5 386.5h1.6v1.6h-1.6zM1544.0 386.5h1.6v1.6h-1.6zM1548.5 386.5h1.6v1.6h-1.6zM1553.0 386.5h1.6v1.6h-1.6zM1557.5 386.5h1.6v1.6h-1.6zM1562.0 386.5h1.6v1.6h-1.6z" fill="#eb9a00"/>
<rect x="1524.0" y="392.0" width="41.0" height="23.5" fill="#ffb414"/>
<path d="M1526.0 393.5h1.6v1.6h-1.6zM1530.5 393.5h1.6v1.6h-1.6zM1535.0 393.5h1.6v1.6h-1.6zM1539.5 393.5h1.6v1.6h-1.6zM1544.0 393.5h1.6v1.6h-1.6zM1548.5 393.5h1.6v1.6h-1.6zM1553.0 393.5h1.6v1.6h-1.6zM1557.5 393.5h1.6v1.6h-1.6zM1562.0 393.5h1.6v1.6h-1.6z" fill="#eb9a00"/>
<path d="M1526.0 412.5h1.6v1.6h-1.6zM1530.5 412.5h1.6v1.6h-1.6zM1535.0 412.5h1.6v1.6h-1.6zM1539.5 412.5h1.6v1.6h-1.6zM1544.0 412.5h1.6v1.6h-1.6zM1548.5 412.5h1.6v1.6h-1.6zM1553.0 412.5h1.6v1.6h-1.6zM1557.5 412.5h1.6v1.6h-1.6zM1562.0 412.5h1.6v1.6h-1.6z" fill="#eb9a00"/>
<rect x="1524.0" y="418.0" width="41.0" height="22.5" fill="#ffb414"/>
<path d="M1526.0 419.5h1.6v1.6h-1.6zM1530.5 419.5h1.6v1.6h-1.6zM1535.0 419.5h1.6v1.6h-1.6zM1539.5 419.5h1.6v1.6h-1.6zM1544.0 419.5h1.6v1.6h-1.6zM1548.5 419.5h1.6v1.6h-1.6zM1553.0 419.5h1.6v1.6h-1.6zM1557.5 419.5h1.6v1.6h-1.6zM1562.0 419.5h1.6v1.6h-1.6z" fill="#eb9a00"/>
<path d="M1526.0 437.5h1.6v1.6h-1.6zM1530.5 437.5h1.6v1.6h-1.6zM1535.0 437.5h1.6v1.6h-1.6zM1539.5 437.5h1.6v1.6h-1.6zM1544.0 437.5h1.6v1.6h-1.6zM1548.5 437.5h1.6v1.6h-1.6zM1553.0 437.5h1.6v1.6h-1.6zM1557.5 437.5h1.6v1.6h-1.6zM1562.0 437.5h1.6v1.6h-1.6z" fill="#eb9a00"/>
<rect x="1545.0" y="336.8" width="8.0" height="2.5" fill="#9a4a00"/>
<rect x="1545.0" y="363.7" width="8.0" height="2.5" fill="#9a4a00"/>
<rect x="1572.4" y="305.0" width="34.3" height="108.0" fill="#f5a200"/>
<rect x="1574.5" y="307.5" width="30.0" height="103.0" fill="#ffae00"/>
<path d="M1576.0 310.0h1.6v1.6h-1.6zM1576.0 314.5h1.6v1.6h-1.6zM1576.0 319.0h1.6v1.6h-1.6zM1576.0 323.5h1.6v1.6h-1.6zM1576.0 328.0h1.6v1.6h-1.6zM1576.0 332.5h1.6v1.6h-1.6zM1576.0 337.0h1.6v1.6h-1.6zM1576.0 341.5h1.6v1.6h-1.6zM1576.0 346.0h1.6v1.6h-1.6zM1576.0 350.5h1.6v1.6h-1.6zM1576.0 355.0h1.6v1.6h-1.6zM1576.0 359.5h1.6v1.6h-1.6zM1576.0 364.0h1.6v1.6h-1.6zM1576.0 368.5h1.6v1.6h-1.6zM1576.0 373.0h1.6v1.6h-1.6zM1576.0 377.5h1.6v1.6h-1.6zM1576.0 382.0h1.6v1.6h-1.6zM1576.0 386.5h1.6v1.6h-1.6zM1576.0 391.0h1.6v1.6h-1.6zM1576.0 395.5h1.6v1.6h-1.6zM1576.0 400.0h1.6v1.6h-1.6zM1576.0 404.5h1.6v1.6h-1.6zM1576.0 409.0h1.6v1.6h-1.6z" fill="#e39400"/>
<path d="M1602.0 310.0h1.6v1.6h-1.6zM1602.0 314.5h1.6v1.6h-1.6zM1602.0 319.0h1.6v1.6h-1.6zM1602.0 323.5h1.6v1.6h-1.6zM1602.0 328.0h1.6v1.6h-1.6zM1602.0 332.5h1.6v1.6h-1.6zM1602.0 337.0h1.6v1.6h-1.6zM1602.0 341.5h1.6v1.6h-1.6zM1602.0 346.0h1.6v1.6h-1.6zM1602.0 350.5h1.6v1.6h-1.6zM1602.0 355.0h1.6v1.6h-1.6zM1602.0 359.5h1.6v1.6h-1.6zM1602.0 364.0h1.6v1.6h-1.6zM1602.0 368.5h1.6v1.6h-1.6zM1602.0 373.0h1.6v1.6h-1.6zM1602.0 377.5h1.6v1.6h-1.6zM1602.0 382.0h1.6v1.6h-1.6zM1602.0 386.5h1.6v1.6h-1.6zM1602.0 391.0h1.6v1.6h-1.6zM1602.0 395.5h1.6v1.6h-1.6zM1602.0 400.0h1.6v1.6h-1.6zM1602.0 404.5h1.6v1.6h-1.6zM1602.0 409.0h1.6v1.6h-1.6z" fill="#e39400"/>
<path d="M1576.0 308.0h1.6v1.6h-1.6zM1580.5 308.0h1.6v1.6h-1.6zM1585.0 308.0h1.6v1.6h-1.6zM1589.5 308.0h1.6v1.6h-1.6zM1594.0 308.0h1.6v1.6h-1.6zM1598.5 308.0h1.6v1.6h-1.6zM1603.0 308.0h1.6v1.6h-1.6z" fill="#e39400"/>
<path d="M1576.0 408.5h1.6v1.6h-1.6zM1580.5 408.5h1.6v1.6h-1.6zM1585.0 408.5h1.6v1.6h-1.6zM1589.5 408.5h1.6v1.6h-1.6zM1594.0 408.5h1.6v1.6h-1.6zM1598.5 408.5h1.6v1.6h-1.6zM1603.0 408.5h1.6v1.6h-1.6z" fill="#e39400"/>
<path d="M1625 298.5 L1660.4 298.5 L1660.4 456 L1625 456 Z" fill="#e38e00"/>
<path d="M1628.0 452.0h1.6v1.6h-1.6zM1632.5 452.0h1.6v1.6h-1.6zM1637.0 452.0h1.6v1.6h-1.6zM1641.5 452.0h1.6v1.6h-1.6zM1646.0 452.0h1.6v1.6h-1.6zM1650.5 452.0h1.6v1.6h-1.6zM1655.0 452.0h1.6v1.6h-1.6zM1659.5 452.0h1.6v1.6h-1.6z" fill="#f5a800"/>
<path d="M1627.0 300.0h1.6v1.6h-1.6zM1627.0 304.5h1.6v1.6h-1.6zM1627.0 309.0h1.6v1.6h-1.6zM1627.0 313.5h1.6v1.6h-1.6zM1627.0 318.0h1.6v1.6h-1.6zM1627.0 322.5h1.6v1.6h-1.6zM1627.0 327.0h1.6v1.6h-1.6zM1627.0 331.5h1.6v1.6h-1.6zM1627.0 336.0h1.6v1.6h-1.6zM1627.0 340.5h1.6v1.6h-1.6zM1627.0 345.0h1.6v1.6h-1.6zM1627.0 349.5h1.6v1.6h-1.6zM1627.0 354.0h1.6v1.6h-1.6zM1627.0 358.5h1.6v1.6h-1.6zM1627.0 363.0h1.6v1.6h-1.6zM1627.0 367.5h1.6v1.6h-1.6zM1627.0 372.0h1.6v1.6h-1.6zM1627.0 376.5h1.6v1.6h-1.6zM1627.0 381.0h1.6v1.6h-1.6zM1627.0 385.5h1.6v1.6h-1.6zM1627.0 390.0h1.6v1.6h-1.6zM1627.0 394.5h1.6v1.6h-1.6zM1627.0 399.0h1.6v1.6h-1.6zM1627.0 403.5h1.6v1.6h-1.6zM1627.0 408.0h1.6v1.6h-1.6zM1627.0 412.5h1.6v1.6h-1.6zM1627.0 417.0h1.6v1.6h-1.6zM1627.0 421.5h1.6v1.6h-1.6zM1627.0 426.0h1.6v1.6h-1.6zM1627.0 430.5h1.6v1.6h-1.6zM1627.0 435.0h1.6v1.6h-1.6zM1627.0 439.5h1.6v1.6h-1.6zM1627.0 444.0h1.6v1.6h-1.6zM1627.0 448.5h1.6v1.6h-1.6zM1627.0 453.0h1.6v1.6h-1.6z" fill="#f0a000"/>
<rect x="1454.0" y="283.0" width="16.0" height="57.0" fill="#f5a200"/>
<rect x="1455.0" y="290.0" width="15.0" height="1.6" fill="#e38e00"/>
<rect x="1455.0" y="296.0" width="15.0" height="1.6" fill="#e38e00"/>
<rect x="1455.0" y="302.0" width="15.0" height="1.6" fill="#e38e00"/>
<rect x="1455.0" y="308.0" width="15.0" height="1.6" fill="#e38e00"/>
<rect x="1455.0" y="314.0" width="15.0" height="1.6" fill="#e38e00"/>
<rect x="1455.0" y="320.0" width="15.0" height="1.6" fill="#e38e00"/>
<rect x="1455.0" y="326.0" width="15.0" height="1.6" fill="#e38e00"/>
<rect x="1455.0" y="332.0" width="15.0" height="1.6" fill="#e38e00"/>
<rect x="1455.0" y="338.0" width="15.0" height="1.6" fill="#e38e00"/>
<rect x="1668.0" y="283.0" width="22.0" height="109.0" fill="#f5a200"/>
<rect x="1668.0" y="290.0" width="22.0" height="1.6" fill="#e38e00"/>
<rect x="1668.0" y="296.0" width="22.0" height="1.6" fill="#e38e00"/>
<rect x="1668.0" y="302.0" width="22.0" height="1.6" fill="#e38e00"/>
<rect x="1668.0" y="308.0" width="22.0" height="1.6" fill="#e38e00"/>
<rect x="1668.0" y="314.0" width="22.0" height="1.6" fill="#e38e00"/>
<rect x="1668.0" y="320.0" width="22.0" height="1.6" fill="#e38e00"/>
<rect x="1668.0" y="326.0" width="22.0" height="1.6" fill="#e38e00"/>
<rect x="1668.0" y="332.0" width="22.0" height="1.6" fill="#e38e00"/>
<rect x="1668.0" y="338.0" width="22.0" height="1.6" fill="#e38e00"/>
<rect x="1668.0" y="344.0" width="22.0" height="1.6" fill="#e38e00"/>
<rect x="1424.0" y="262.0" width="30.0" height="204.0" fill="#df5500"/>
<rect x="1447.0" y="262.0" width="7.0" height="204.0" fill="#a93d00"/>
<rect x="1423.4" y="466.0" width="13.6" height="38.5" fill="#df5500"/>
<rect x="1482.0" y="274.6" width="16.5" height="30.2" fill="#df5500"/>
<rect x="1493.0" y="274.6" width="5.5" height="30.2" fill="#a93d00"/>
<rect x="1454.0" y="337.0" width="11.0" height="46.0" fill="#df5500"/>
<rect x="1660.0" y="300.0" width="21.0" height="92.0" fill="#df5500"/>
<rect x="1672.5" y="300.0" width="8.5" height="92.0" fill="#a93d00"/>
<rect x="1690.8" y="270.0" width="18.2" height="122.0" fill="#df5500"/>
<rect x="1702.5" y="270.0" width="6.5" height="122.0" fill="#a93d00"/>
<rect x="1709.0" y="265.0" width="15.5" height="127.0" fill="#df5500"/>
<rect x="1718.0" y="265.0" width="6.5" height="127.0" fill="#a93d00"/>
<rect x="1724.5" y="262.0" width="27.5" height="130.0" fill="#df5500"/>
<rect x="1745.0" y="262.0" width="7.0" height="130.0" fill="#a93d00"/>
<rect x="1731.0" y="262.0" width="1.2" height="130.0" fill="#c85000"/>
<rect x="1738.0" y="262.0" width="1.2" height="130.0" fill="#c85000"/>
<path d="M1426.7 264.4 C1428 255 1431 250 1434.4 247.6 C1438 238 1442 232 1447.4 226.8 C1452 222 1456 220 1460.4 219 L1472 217.8 L1474 230 L1470 300 L1460 290 C1455 287 1457.8 283.9 1457.8 283.9 C1445 281 1432 274 1426.7 265.7 Z" fill="url(#domeL)"/>
<path d="M1426.7 265.7 C1432 274 1445 281 1457.8 283.9 L1458 286 C1444 284 1430 276 1426 267 Z" fill="#e89600"/>
<path d="M1662 285 L1662 243.7 C1670 230 1680 220 1690.8 217.8 L1706 219 C1712 222 1718 226 1724.5 230.8 C1730 236 1734 242 1737.5 247.6 C1741 253 1744 258 1746.6 263.2 C1735 271 1722 276 1710 277.5 C1695 281 1680 284 1662 285 Z" fill="url(#domeR)"/>
<path d="M1746.6 263.2 C1735 271 1722 276 1710 277.5 C1695 281 1680 284 1662 285 L1662 288 C1690 286 1725 280 1748 265 Z" fill="#e89600"/>
<circle cx="1702.5" cy="216.5" r="3.6" fill="#ffb000"/>
<path d="M1434 406 L1429 440 C1427 455 1429 470 1436 481 C1442 488 1452 492 1463 495 L1468 486 L1468 383 L1453.7 383 L1453.7 466 L1437 466 L1437 425 Z" fill="#ffae00"/>
<path d="M1431 445 C1431 470 1440 486 1462 492 L1462 495 C1445 492 1432 480 1429 460 Z" fill="#f5a200"/>
<rect x="1468.0" y="443.0" width="138.7" height="19.0" fill="#ffae00"/>
<rect x="1606.7" y="456.0" width="55.3" height="6.0" fill="#f5a200"/>
<path d="M1610.0 456.0h1.6v1.6h-1.6zM1615.0 456.0h1.6v1.6h-1.6zM1620.0 456.0h1.6v1.6h-1.6zM1625.0 456.0h1.6v1.6h-1.6zM1630.0 456.0h1.6v1.6h-1.6zM1635.0 456.0h1.6v1.6h-1.6zM1640.0 456.0h1.6v1.6h-1.6zM1645.0 456.0h1.6v1.6h-1.6zM1650.0 456.0h1.6v1.6h-1.6zM1655.0 456.0h1.6v1.6h-1.6z" fill="#e39400"/>
<rect x="1610.0" y="455.0" width="52.0" height="7.0" fill="#f5a200"/>
<rect x="1453.7" y="380.0" width="14.3" height="114.0" fill="#ffae00"/>
<rect x="1468.0" y="380.0" width="6.4" height="166.0" fill="#ffbb14"/>
<rect x="1512.0" y="462.0" width="9.5" height="128.0" fill="#ffae00"/>
<rect x="1512.0" y="694.0" width="9.5" height="96.0" fill="#ffae00"/>
<rect x="1511.0" y="812.0" width="9.0" height="18.0" fill="#ffae00"/>
<rect x="1553.0" y="462.0" width="13.0" height="18.0" fill="#ffae00"/>
<path d="M1648 400 C1650 392 1655 388 1664 388 L1745 392 L1772 400 L1773 570 L1760 590 L1660 592 L1654 560 Z" fill="#ffae00"/>
<rect x="1752.0" y="335.0" width="10.0" height="65.0" fill="#ffae00"/>
<rect x="1710.0" y="400.0" width="35.0" height="190.0" fill="#f5a500"/>
<rect x="1745.0" y="400.0" width="28.0" height="190.0" fill="#f9a800"/>
<rect x="1668.0" y="430.0" width="40.0" height="2.0" fill="#e38e00"/>
<rect x="1668.0" y="462.0" width="40.0" height="2.0" fill="#e38e00"/>
<rect x="1668.0" y="494.0" width="40.0" height="2.0" fill="#e38e00"/>
<rect x="1668.0" y="526.0" width="40.0" height="2.0" fill="#e38e00"/>
<rect x="1668.0" y="558.0" width="40.0" height="2.0" fill="#e38e00"/>
<rect x="1718.0" y="415.0" width="18.0" height="16.0" fill="#ffb40a"/>
<rect x="1736.0" y="419.0" width="4.0" height="6.0" fill="#ff9a00"/>
<rect x="1718.0" y="438.0" width="18.0" height="16.0" fill="#ffb40a"/>
<rect x="1736.0" y="442.0" width="4.0" height="6.0" fill="#ff9a00"/>
<rect x="1718.0" y="461.0" width="18.0" height="16.0" fill="#ffb40a"/>
<rect x="1736.0" y="465.0" width="4.0" height="6.0" fill="#ff9a00"/>
<rect x="1718.0" y="484.0" width="18.0" height="16.0" fill="#ffb40a"/>
<rect x="1736.0" y="488.0" width="4.0" height="6.0" fill="#ff9a00"/>
<rect x="1718.0" y="507.0" width="18.0" height="16.0" fill="#ffb40a"/>
<rect x="1736.0" y="511.0" width="4.0" height="6.0" fill="#ff9a00"/>
<rect x="1718.0" y="530.0" width="18.0" height="16.0" fill="#ffb40a"/>
<rect x="1736.0" y="534.0" width="4.0" height="6.0" fill="#ff9a00"/>
<rect x="1718.0" y="553.0" width="18.0" height="16.0" fill="#ffb40a"/>
<rect x="1736.0" y="557.0" width="4.0" height="6.0" fill="#ff9a00"/>
<rect x="1718.0" y="576.0" width="18.0" height="16.0" fill="#ffb40a"/>
<rect x="1736.0" y="580.0" width="4.0" height="6.0" fill="#ff9a00"/>
<rect x="1747.0" y="410.0" width="24.0" height="2.2" fill="#e38e00"/>
<rect x="1747.0" y="439.0" width="24.0" height="2.2" fill="#e38e00"/>
<rect x="1747.0" y="468.0" width="24.0" height="2.2" fill="#e38e00"/>
<rect x="1747.0" y="497.0" width="24.0" height="2.2" fill="#e38e00"/>
<rect x="1747.0" y="526.0" width="24.0" height="2.2" fill="#e38e00"/>
<rect x="1747.0" y="555.0" width="24.0" height="2.2" fill="#e38e00"/>
<rect x="1747.0" y="584.0" width="24.0" height="2.2" fill="#e38e00"/>
<rect x="1708.0" y="400.0" width="2.0" height="190.0" fill="#e38e00"/>
<rect x="1743.0" y="400.0" width="2.0" height="190.0" fill="#e38e00"/>
<path d="M1700.0 395.0h1.6v1.6h-1.6zM1700.0 400.0h1.6v1.6h-1.6zM1700.0 405.0h1.6v1.6h-1.6zM1700.0 410.0h1.6v1.6h-1.6zM1700.0 415.0h1.6v1.6h-1.6zM1700.0 420.0h1.6v1.6h-1.6zM1700.0 425.0h1.6v1.6h-1.6zM1700.0 430.0h1.6v1.6h-1.6zM1700.0 435.0h1.6v1.6h-1.6zM1700.0 440.0h1.6v1.6h-1.6zM1700.0 445.0h1.6v1.6h-1.6zM1700.0 450.0h1.6v1.6h-1.6zM1700.0 455.0h1.6v1.6h-1.6zM1700.0 460.0h1.6v1.6h-1.6zM1700.0 465.0h1.6v1.6h-1.6zM1700.0 470.0h1.6v1.6h-1.6zM1700.0 475.0h1.6v1.6h-1.6zM1700.0 480.0h1.6v1.6h-1.6zM1700.0 485.0h1.6v1.6h-1.6zM1700.0 490.0h1.6v1.6h-1.6zM1700.0 495.0h1.6v1.6h-1.6zM1700.0 500.0h1.6v1.6h-1.6zM1700.0 505.0h1.6v1.6h-1.6zM1700.0 510.0h1.6v1.6h-1.6zM1700.0 515.0h1.6v1.6h-1.6zM1700.0 520.0h1.6v1.6h-1.6zM1700.0 525.0h1.6v1.6h-1.6zM1700.0 530.0h1.6v1.6h-1.6zM1700.0 535.0h1.6v1.6h-1.6zM1700.0 540.0h1.6v1.6h-1.6zM1700.0 545.0h1.6v1.6h-1.6zM1700.0 550.0h1.6v1.6h-1.6zM1700.0 555.0h1.6v1.6h-1.6zM1700.0 560.0h1.6v1.6h-1.6zM1700.0 565.0h1.6v1.6h-1.6zM1700.0 570.0h1.6v1.6h-1.6zM1700.0 575.0h1.6v1.6h-1.6zM1700.0 580.0h1.6v1.6h-1.6zM1700.0 585.0h1.6v1.6h-1.6z" fill="#e39400"/>
<path d="M1712.0 395.0h1.6v1.6h-1.6zM1712.0 400.0h1.6v1.6h-1.6zM1712.0 405.0h1.6v1.6h-1.6zM1712.0 410.0h1.6v1.6h-1.6zM1712.0 415.0h1.6v1.6h-1.6zM1712.0 420.0h1.6v1.6h-1.6zM1712.0 425.0h1.6v1.6h-1.6zM1712.0 430.0h1.6v1.6h-1.6zM1712.0 435.0h1.6v1.6h-1.6zM1712.0 440.0h1.6v1.6h-1.6zM1712.0 445.0h1.6v1.6h-1.6zM1712.0 450.0h1.6v1.6h-1.6zM1712.0 455.0h1.6v1.6h-1.6zM1712.0 460.0h1.6v1.6h-1.6zM1712.0 465.0h1.6v1.6h-1.6zM1712.0 470.0h1.6v1.6h-1.6zM1712.0 475.0h1.6v1.6h-1.6zM1712.0 480.0h1.6v1.6h-1.6zM1712.0 485.0h1.6v1.6h-1.6zM1712.0 490.0h1.6v1.6h-1.6zM1712.0 495.0h1.6v1.6h-1.6zM1712.0 500.0h1.6v1.6h-1.6zM1712.0 505.0h1.6v1.6h-1.6zM1712.0 510.0h1.6v1.6h-1.6zM1712.0 515.0h1.6v1.6h-1.6zM1712.0 520.0h1.6v1.6h-1.6zM1712.0 525.0h1.6v1.6h-1.6zM1712.0 530.0h1.6v1.6h-1.6zM1712.0 535.0h1.6v1.6h-1.6zM1712.0 540.0h1.6v1.6h-1.6zM1712.0 545.0h1.6v1.6h-1.6zM1712.0 550.0h1.6v1.6h-1.6zM1712.0 555.0h1.6v1.6h-1.6zM1712.0 560.0h1.6v1.6h-1.6zM1712.0 565.0h1.6v1.6h-1.6zM1712.0 570.0h1.6v1.6h-1.6zM1712.0 575.0h1.6v1.6h-1.6zM1712.0 580.0h1.6v1.6h-1.6zM1712.0 585.0h1.6v1.6h-1.6z" fill="#e39400"/>
<circle cx="1660" cy="413" r="14" fill="#f0a000"/><circle cx="1663" cy="413" r="10" fill="#ffb80f"/>
<rect x="1474.4" y="413.0" width="37.6" height="417.0" fill="#df5500"/>
<rect x="1505.8" y="413.0" width="6.2" height="417.0" fill="#a93d00"/>
<rect x="1492.0" y="413.0" width="1.2" height="417.0" fill="#c85000"/>
<rect x="1522.5" y="443.0" width="31.2" height="444.0" fill="#df5500"/>
<rect x="1549.6" y="443.0" width="4.2" height="444.0" fill="#a93d00"/>
<rect x="1535.0" y="443.0" width="1.2" height="444.0" fill="#c85000"/>
<rect x="1566.0" y="416.0" width="44.0" height="30.0" fill="#df5500"/>
<rect x="1605.0" y="416.0" width="5.0" height="30.0" fill="#a93d00"/>
<rect x="1578.7" y="416.0" width="1.2" height="30.0" fill="#c85000"/>
<rect x="1593.8" y="416.0" width="1.2" height="30.0" fill="#c85000"/>
<rect x="1566.0" y="446.0" width="31.0" height="392.0" fill="#df5500"/>
<rect x="1591.4" y="446.0" width="5.6" height="392.0" fill="#a93d00"/>
<rect x="1578.7" y="446.0" width="1.2" height="392.0" fill="#c85000"/>
<rect x="1601.7" y="462.0" width="33.3" height="154.0" fill="#df5500"/>
<rect x="1627.0" y="462.0" width="8.0" height="154.0" fill="#a93d00"/>
<rect x="1425.2" y="552.4" width="20.8" height="47.6" fill="#df5500"/>
<rect x="1466.0" y="546.0" width="8.4" height="284.0" fill="#df5500"/>
<path d="M1394 520 C1396 514 1404 513 1412 516 L1420 512 L1447 509.6 L1447 546 L1443 556 L1412 556 L1412 528 L1400 526 Z" fill="#ffae00"/>
<rect x="1412.0" y="546.0" width="31.0" height="10.0" fill="#f5a200"/>
<g fill="#ffb000">
<rect x="1404" y="566" width="14" height="34"/>
<rect x="1419" y="562" width="28" height="16" transform="rotate(-6 1433 570)"/>
<circle cx="1432" cy="594" r="9.5"/>
<rect x="1447" y="548" width="20" height="92"/>
<circle cx="1457" cy="586" r="8"/><circle cx="1457" cy="612" r="8"/>
<rect x="1416" y="616" width="36" height="10" transform="rotate(35 1434 621)"/>
<rect x="1430" y="600" width="18" height="18" transform="rotate(25 1439 609)"/>
</g>
<g fill="none" stroke="#e39400" stroke-width="1.2"><circle cx="1432" cy="594" r="5"/><circle cx="1457" cy="586" r="4.5"/><circle cx="1457" cy="612" r="4.5"/></g>
<rect x="1404.0" y="598.0" width="14.0" height="3.0" fill="#f5a200"/>
<rect x="1447.0" y="568.0" width="20.0" height="2.0" fill="#f5a200"/>
<rect x="1447.0" y="630.0" width="20.0" height="2.0" fill="#f5a200"/>
<rect x="1393.5" y="525.6" width="18.5" height="341.4" fill="#df5500"/>
<rect x="1404.8" y="525.6" width="7.2" height="341.4" fill="#a93d00"/>
<rect x="1447.2" y="495.4" width="19.5" height="47.6" fill="#df5500"/>
<rect x="1460.0" y="495.4" width="6.7" height="47.6" fill="#a93d00"/>
<rect x="1412.0" y="618.0" width="21.0" height="253.5" fill="#df5500"/>
<rect x="1424.6" y="618.0" width="8.4" height="253.5" fill="#a93d00"/>
<rect x="1434.0" y="624.0" width="31.0" height="209.0" fill="#df5500"/>
<rect x="1451.7" y="624.0" width="13.3" height="209.0" fill="#a93d00"/>
<rect x="1513.0" y="590.0" width="8.5" height="104.0" fill="#df5500"/>
<rect x="1518.0" y="590.0" width="3.5" height="104.0" fill="#a93d00"/>
<rect x="1555.5" y="594.0" width="41.5" height="244.0" fill="#df5500"/>
<rect x="1591.4" y="594.0" width="5.6" height="244.0" fill="#a93d00"/>
<rect x="1574.6" y="594.0" width="1.2" height="244.0" fill="#c85000"/>
<rect x="1599.6" y="560.0" width="14.4" height="56.0" fill="#df5500"/>
<rect x="1610.0" y="560.0" width="4.0" height="56.0" fill="#a93d00"/>
<rect x="1614.0" y="560.0" width="19.0" height="73.0" fill="#df5500"/>
<rect x="1626.7" y="560.0" width="6.3" height="73.0" fill="#a93d00"/>
<rect x="1688.0" y="380.0" width="19.0" height="91.5" fill="#df5500"/>
<rect x="1702.0" y="380.0" width="5.0" height="91.5" fill="#a93d00"/>
<rect x="1710.0" y="395.0" width="19.0" height="30.6" fill="#df5500"/>
<rect x="1724.0" y="395.0" width="5.0" height="30.6" fill="#a93d00"/>
<rect x="1693.3" y="560.0" width="18.7" height="338.5" fill="#df5500"/>
<rect x="1707.0" y="560.0" width="5.0" height="338.5" fill="#a93d00"/>
<rect x="1712.0" y="583.0" width="11.5" height="312.0" fill="#df5500"/>
<rect x="1718.0" y="583.0" width="5.5" height="312.0" fill="#a93d00"/>
<rect x="1723.5" y="583.0" width="15.5" height="312.0" fill="#df5500"/>
<rect x="1733.0" y="583.0" width="6.0" height="312.0" fill="#a93d00"/>
<rect x="1739.0" y="577.0" width="18.0" height="319.5" fill="#df5500"/>
<rect x="1750.6" y="577.0" width="6.4" height="319.5" fill="#a93d00"/>
<rect x="1757.0" y="571.5" width="12.4" height="321.5" fill="#df5500"/>
<rect x="1762.0" y="571.5" width="7.4" height="321.5" fill="#a93d00"/>
<rect x="1712.0" y="572.0" width="54.0" height="11.0" fill="#ffae00"/>
<rect x="1655.7" y="553.0" width="39.3" height="45.6" fill="#ffae00"/>
<path d="M1658.0 553.0h1.6v1.6h-1.6zM1658.0 557.5h1.6v1.6h-1.6zM1658.0 562.0h1.6v1.6h-1.6zM1658.0 566.5h1.6v1.6h-1.6zM1658.0 571.0h1.6v1.6h-1.6zM1658.0 575.5h1.6v1.6h-1.6zM1658.0 580.0h1.6v1.6h-1.6zM1658.0 584.5h1.6v1.6h-1.6zM1658.0 589.0h1.6v1.6h-1.6zM1658.0 593.5h1.6v1.6h-1.6z" fill="#e39400"/>
<path d="M1658.0 595.0h1.6v1.6h-1.6zM1662.5 595.0h1.6v1.6h-1.6zM1667.0 595.0h1.6v1.6h-1.6zM1671.5 595.0h1.6v1.6h-1.6zM1676.0 595.0h1.6v1.6h-1.6zM1680.5 595.0h1.6v1.6h-1.6zM1685.0 595.0h1.6v1.6h-1.6zM1689.5 595.0h1.6v1.6h-1.6zM1694.0 595.0h1.6v1.6h-1.6z" fill="#e39400"/>
<path d="M1658.0 554.0h1.6v1.6h-1.6zM1662.5 554.0h1.6v1.6h-1.6zM1667.0 554.0h1.6v1.6h-1.6zM1671.5 554.0h1.6v1.6h-1.6zM1676.0 554.0h1.6v1.6h-1.6zM1680.5 554.0h1.6v1.6h-1.6zM1685.0 554.0h1.6v1.6h-1.6zM1689.5 554.0h1.6v1.6h-1.6zM1694.0 554.0h1.6v1.6h-1.6z" fill="#e39400"/>
<rect x="1665.4" y="559.7" width="27.1" height="32.0" fill="#df5500"/>
<rect x="1688.0" y="559.7" width="4.5" height="32.0" fill="#a93d00"/>
<rect x="1678.6" y="559.7" width="1.2" height="32.0" fill="#c85000"/>
<rect x="1632.8" y="462.0" width="11.2" height="358.0" fill="#ffae00"/>
<rect x="1644.0" y="462.0" width="6.8" height="358.0" fill="#f5a200"/>
<rect x="1650.8" y="598.0" width="15.2" height="62.0" fill="#e38e00"/>
<rect x="1596.0" y="650.0" width="78.4" height="170.0" fill="#ffae00"/>
<rect x="1644.0" y="650.0" width="30.4" height="170.0" fill="#f5a200"/>
<rect x="1650.0" y="650.0" width="1.2" height="165.0" fill="#e38e00"/>
<rect x="1657.0" y="650.0" width="1.2" height="165.0" fill="#e38e00"/>
<rect x="1664.0" y="650.0" width="1.2" height="165.0" fill="#e38e00"/>
<rect x="1596.7" y="616.7" width="20.1" height="23.3" fill="#f5a200"/>
<path d="M1598.0 619.0h1.6v1.6h-1.6zM1602.0 619.0h1.6v1.6h-1.6zM1606.0 619.0h1.6v1.6h-1.6zM1610.0 619.0h1.6v1.6h-1.6zM1614.0 619.0h1.6v1.6h-1.6z" fill="#e39400"/>
<path d="M1596 638 L1632.8 638 C1648 638 1660 630 1672 621 L1686 610 L1692 621 L1680 632 C1664 644 1650 651 1632.8 651 L1596 651 Z" fill="#ffb30a"/>
<path d="M1600.0 641.0h1.6v1.6h-1.6zM1604.5 641.0h1.6v1.6h-1.6zM1609.0 641.0h1.6v1.6h-1.6zM1613.5 641.0h1.6v1.6h-1.6zM1618.0 641.0h1.6v1.6h-1.6zM1622.5 641.0h1.6v1.6h-1.6zM1627.0 641.0h1.6v1.6h-1.6zM1631.5 641.0h1.6v1.6h-1.6zM1636.0 641.0h1.6v1.6h-1.6zM1640.5 641.0h1.6v1.6h-1.6zM1645.0 641.0h1.6v1.6h-1.6zM1649.5 641.0h1.6v1.6h-1.6zM1654.0 641.0h1.6v1.6h-1.6zM1658.5 641.0h1.6v1.6h-1.6z" fill="#e39400"/>
<g fill="#ffb000"><circle cx="1684" cy="606" r="9"/><rect x="1674" y="614" width="18" height="16" transform="rotate(-30 1683 622)"/><rect x="1678" y="628" width="14" height="24"/></g>
<circle cx="1684" cy="606" r="5" fill="none" stroke="#e39400" stroke-width="1.2"/>
<rect x="1693.3" y="590.0" width="18.7" height="308.5" fill="#df5500"/>
<rect x="1707.0" y="590.0" width="5.0" height="308.5" fill="#a93d00"/>
<rect x="1597.0" y="652.0" width="28.0" height="24.0" fill="#ffb30a"/>
<rect x="1597.0" y="674.5" width="28.0" height="3.0" fill="#e38e00"/>
<path d="M1599.0 654.0h1.6v1.6h-1.6zM1603.0 654.0h1.6v1.6h-1.6zM1607.0 654.0h1.6v1.6h-1.6zM1611.0 654.0h1.6v1.6h-1.6zM1615.0 654.0h1.6v1.6h-1.6zM1619.0 654.0h1.6v1.6h-1.6zM1623.0 654.0h1.6v1.6h-1.6z" fill="#e39400"/>
<rect x="1597.0" y="680.0" width="28.0" height="25.0" fill="#ffb30a"/>
<rect x="1597.0" y="703.5" width="28.0" height="3.0" fill="#e38e00"/>
<path d="M1599.0 682.0h1.6v1.6h-1.6zM1603.0 682.0h1.6v1.6h-1.6zM1607.0 682.0h1.6v1.6h-1.6zM1611.0 682.0h1.6v1.6h-1.6zM1615.0 682.0h1.6v1.6h-1.6zM1619.0 682.0h1.6v1.6h-1.6zM1623.0 682.0h1.6v1.6h-1.6z" fill="#e39400"/>
<rect x="1597.0" y="709.0" width="28.0" height="25.0" fill="#ffb30a"/>
<rect x="1597.0" y="732.5" width="28.0" height="3.0" fill="#e38e00"/>
<path d="M1599.0 711.0h1.6v1.6h-1.6zM1603.0 711.0h1.6v1.6h-1.6zM1607.0 711.0h1.6v1.6h-1.6zM1611.0 711.0h1.6v1.6h-1.6zM1615.0 711.0h1.6v1.6h-1.6zM1619.0 711.0h1.6v1.6h-1.6zM1623.0 711.0h1.6v1.6h-1.6z" fill="#e39400"/>
<rect x="1597.0" y="738.0" width="28.0" height="25.0" fill="#ffb30a"/>
<rect x="1597.0" y="761.5" width="28.0" height="3.0" fill="#e38e00"/>
<path d="M1599.0 740.0h1.6v1.6h-1.6zM1603.0 740.0h1.6v1.6h-1.6zM1607.0 740.0h1.6v1.6h-1.6zM1611.0 740.0h1.6v1.6h-1.6zM1615.0 740.0h1.6v1.6h-1.6zM1619.0 740.0h1.6v1.6h-1.6zM1623.0 740.0h1.6v1.6h-1.6z" fill="#e39400"/>
<rect x="1597.0" y="767.0" width="28.0" height="25.0" fill="#ffb30a"/>
<rect x="1597.0" y="790.5" width="28.0" height="3.0" fill="#e38e00"/>
<path d="M1599.0 769.0h1.6v1.6h-1.6zM1603.0 769.0h1.6v1.6h-1.6zM1607.0 769.0h1.6v1.6h-1.6zM1611.0 769.0h1.6v1.6h-1.6zM1615.0 769.0h1.6v1.6h-1.6zM1619.0 769.0h1.6v1.6h-1.6zM1623.0 769.0h1.6v1.6h-1.6z" fill="#e39400"/>
<rect x="1625.0" y="650.0" width="3.0" height="155.0" fill="#f5a200"/>
<rect x="1664.0" y="664.0" width="26.0" height="229.0" fill="#df5500"/>
<rect x="1682.8" y="664.0" width="7.2" height="229.0" fill="#a93d00"/>
<rect x="1628.0" y="675.0" width="16.0" height="170.4" fill="#df5500"/>
<rect x="1640.0" y="675.0" width="4.0" height="170.4" fill="#a93d00"/>
<rect x="1596.0" y="805.0" width="32.0" height="35.0" fill="#df5500"/>
<rect x="1622.0" y="805.0" width="6.0" height="35.0" fill="#a93d00"/>
<rect x="1606.0" y="805.0" width="1.2" height="35.0" fill="#c85000"/>
<rect x="1616.0" y="805.0" width="1.2" height="35.0" fill="#c85000"/>
<rect x="1411.5" y="640.0" width="0.9" height="227.0" fill="#d8e6f2"/>
<rect x="1432.6" y="640.0" width="0.9" height="231.0" fill="#d8e6f2"/>
<rect x="1465.6" y="660.0" width="0.9" height="166.0" fill="#d8e6f2"/>
<polygon points="1493.8,834.0 1509.6,831.0 1519.6,835.0 1519.6,873.3 1497.8,873.3" fill="#f29c00"/>
<path d="M1423.3 873.3 L1423.3 844.0 Q1423.3 834.0 1435.3 834.0 L1485.8 834.0 Q1497.8 834.0 1497.8 846.0 L1497.8 873.3 Z" fill="#ffb000"/>
<path d="M1426.3 873.3 L1426.3 845.0 Q1426.3 837.0 1435.3 837.0 L1485.8 837.0 Q1494.8 837.0 1494.8 846.0 L1494.8 873.3 Z" fill="#f5a400"/>
<rect x="1430.8" y="842.3" width="8.9" height="31.7" rx="4.4" fill="#ffb30d"/>
<rect x="1436.4" y="845.3" width="1.6" height="25.7" fill="#f7a800"/>
<rect x="1440.7" y="842.3" width="8.9" height="31.7" rx="4.4" fill="#ffb30d"/>
<rect x="1446.3" y="845.3" width="1.6" height="25.7" fill="#f7a800"/>
<rect x="1450.5" y="842.3" width="8.9" height="31.7" rx="4.4" fill="#ffb30d"/>
<rect x="1456.1" y="845.3" width="1.6" height="25.7" fill="#f7a800"/>
<rect x="1460.3" y="842.3" width="8.9" height="31.7" rx="4.4" fill="#ffb30d"/>
<rect x="1466.0" y="845.3" width="1.6" height="25.7" fill="#f7a800"/>
<rect x="1470.2" y="842.3" width="8.9" height="31.7" rx="4.4" fill="#ffb30d"/>
<rect x="1475.8" y="845.3" width="1.6" height="25.7" fill="#f7a800"/>
<rect x="1480.1" y="842.3" width="8.9" height="31.7" rx="4.4" fill="#ffb30d"/>
<rect x="1485.7" y="845.3" width="1.6" height="25.7" fill="#f7a800"/>
<polygon points="1431.3,834.5 1439.8,829.7 1502.4,829.7 1509.6,831.0 1493.8,834.5" fill="#f0a000"/>
<polygon points="1445.8,822.7 1496.4,822.7 1502.4,829.7 1439.8,829.7" fill="#f5a300"/>
<rect x="1447.8" y="823.7" width="21.3" height="5.0" fill="#ffb000"/>
<rect x="1473.1" y="823.7" width="21.3" height="5.0" fill="#ffb000"/>
<path d="M1416.3 891.6 L1418.3 873.3 L1517.6 873.3 L1519.6 891.6 Z" fill="#ffb000"/>
<rect x="1418.3" y="873.3" width="99.3" height="2.0" fill="#f5a400"/>
<rect x="1416.3" y="889.6" width="103.3" height="2.0" fill="#f0a000"/>
<rect x="1520.4" y="800.0" width="33.3" height="87.0" fill="#df5500"/>
<rect x="1549.6" y="800.0" width="4.2" height="87.0" fill="#a93d00"/>
<rect x="1533.0" y="800.0" width="1.2" height="87.0" fill="#c85000"/>
<polygon points="1614.8,843.8 1635.5,845.0 1645.5,849.0 1645.5,884.5 1618.8,884.5" fill="#f29c00"/>
<path d="M1537.2 884.5 L1537.2 853.8 Q1537.2 843.8 1549.2 843.8 L1606.8 843.8 Q1618.8 843.8 1618.8 855.8 L1618.8 884.5 Z" fill="#ffb000"/>
<path d="M1540.2 884.5 L1540.2 854.8 Q1540.2 846.8 1549.2 846.8 L1606.8 846.8 Q1615.8 846.8 1615.8 855.8 L1615.8 884.5 Z" fill="#f5a400"/>
<rect x="1545.5" y="853.6" width="9.2" height="30.4" rx="4.6" fill="#ffb30d"/>
<rect x="1551.3" y="856.6" width="1.6" height="24.4" fill="#f7a800"/>
<rect x="1555.7" y="853.6" width="9.2" height="30.4" rx="4.6" fill="#ffb30d"/>
<rect x="1561.5" y="856.6" width="1.6" height="24.4" fill="#f7a800"/>
<rect x="1565.8" y="853.6" width="9.2" height="30.4" rx="4.6" fill="#ffb30d"/>
<rect x="1571.6" y="856.6" width="1.6" height="24.4" fill="#f7a800"/>
<rect x="1576.0" y="853.6" width="9.2" height="30.4" rx="4.6" fill="#ffb30d"/>
<rect x="1581.8" y="856.6" width="1.6" height="24.4" fill="#f7a800"/>
<rect x="1586.2" y="853.6" width="9.2" height="30.4" rx="4.6" fill="#ffb30d"/>
<rect x="1592.0" y="856.6" width="1.6" height="24.4" fill="#f7a800"/>
<rect x="1596.3" y="853.6" width="9.2" height="30.4" rx="4.6" fill="#ffb30d"/>
<rect x="1602.1" y="856.6" width="1.6" height="24.4" fill="#f7a800"/>
<polygon points="1545.2,844.3 1553.7,842.3 1630.4,842.3 1635.5,845.0 1614.8,844.3" fill="#f0a000"/>
<polygon points="1559.7,834.0 1624.4,834.0 1630.4,842.3 1553.7,842.3" fill="#f5a300"/>
<rect x="1561.7" y="835.0" width="28.4" height="6.3" fill="#ffb000"/>
<rect x="1594.1" y="835.0" width="28.3" height="6.3" fill="#ffb000"/>
<path d="M1529.5 903.5 L1531.5 884.5 L1643.5 884.5 L1645.5 903.5 Z" fill="#ffb000"/>
<rect x="1531.5" y="884.5" width="112.0" height="2.0" fill="#f5a400"/>
<rect x="1529.5" y="901.5" width="116.0" height="2.0" fill="#f0a000"/>
<rect x="1643.0" y="829.0" width="21.0" height="62.0" fill="#ffae00"/>
<rect x="1655.0" y="829.0" width="9.0" height="62.0" fill="#f5a200"/>
<rect x="1663.0" y="820.0" width="23.0" height="73.0" fill="#df5500"/>
<rect x="1676.7" y="820.0" width="9.3" height="73.0" fill="#a93d00"/>
<rect x="1689.0" y="820.0" width="21.0" height="78.5" fill="#df5500"/>
<rect x="1703.8" y="820.0" width="6.2" height="78.5" fill="#a93d00"/>
</g>
</svg><!--/SCENE-->
<!-- right toolbar -->
<div class="a" style="left:1885px;top:46px;width:35px;height:971px;border-left:1px solid #fff;border-bottom:1px solid #aaa"></div>

<svg class="a" style="left:1880px;top:40px" width="40" height="500" viewBox="1880 40 40 500"><path d="M1890 49.5h26" stroke="#9a9a9a" stroke-width="1.6" stroke-dasharray="2 1.6"/><rect x="1887.5" y="54.4" width="30" height="28.4" fill="#cce4f7" stroke="#99c9ef" stroke-width="1"/><rect x="1887.5" y="306.0" width="30" height="28.4" fill="#cce4f7" stroke="#99c9ef" stroke-width="1"/><rect x="1887.5" y="336.0" width="30" height="28.4" fill="#cce4f7" stroke="#99c9ef" stroke-width="1"/><path d="M1890 176.6h26" stroke="#d4d4d4" stroke-width="1"/><path d="M1890 302.0h26" stroke="#d4d4d4" stroke-width="1"/><path d="M1890 428.4h26" stroke="#d4d4d4" stroke-width="1"/><path d="M1890 464.4h26" stroke="#d4d4d4" stroke-width="1"/><polygon points="1897,61 1898.8,76 1902.3,72 1906.2,78.5 1909.2,76.8 1905.3,70.3 1910,69" fill="#4a4f57"/><g fill="#555"><polygon points="1902,88 1898.5,92.5 1905.5,92.5"/><polygon points="1902,110 1898.5,105.5 1905.5,105.5"/><polygon points="1890.5,99 1895,95.5 1895,102.5"/><polygon points="1913.5,99 1909,95.5 1909,102.5"/></g><path d="M1902 92v14M1895 99h14" stroke="#555" stroke-width="1.4"/><rect x="1900" y="97" width="4" height="4" fill="#9a9a9a"/><rect x="1895" y="120" width="18" height="13" fill="none" stroke="#4a4f57" stroke-width="1.6"/><rect x="1890.5" y="129.5" width="8" height="8" fill="#f0f0f0" stroke="#8a8a8a" stroke-width="1.4"/><path d="M1901 130l8-6" stroke="#4a4f57" stroke-width="2"/><polygon points="1910.5,122.5 1904,123.5 1909,128" fill="#4a4f57"/><path d="M1894.5 156 A8 8 0 0 1 1910 155" stroke="#505050" stroke-width="2.4" fill="none"/><polygon points="1891,153 1898,153.5 1893,159" fill="#505050"/><path d="M1909.5 162 A8 8 0 0 1 1894 163" stroke="#8e8e8e" stroke-width="2.4" fill="none"/><polygon points="1913,165 1906,164.5 1911,159" fill="#8e8e8e"/><polygon points="1891.5,186.0 1900.5,183.8 1913.0,185.8 1904.3,188.5" fill="#7b9bb7"/><polygon points="1891.5,186.0 1904.3,188.5 1904.3,205.5 1892.5,203.0" fill="#6a8cab"/><polygon points="1904.3,188.5 1913.0,185.8 1912.3,202.5 1904.3,205.5" fill="#5b7c99"/><polygon points="1891.5,216.5 1900.5,214.3 1913.0,216.3 1904.3,219.0" fill="#7496b4"/><polygon points="1891.5,216.5 1904.3,219.0 1904.3,236.0 1892.5,233.5" fill="#bdbdbd"/><polygon points="1904.3,219.0 1913.0,216.3 1912.3,233.0 1904.3,236.0" fill="#8d8d8d"/><polygon points="1891.5,246.0 1900.5,243.8 1913.0,245.8 1904.3,248.5" fill="#a6a6a6"/><polygon points="1891.5,246.0 1904.3,248.5 1904.3,265.5 1892.5,263.0" fill="#6a8cab"/><polygon points="1904.3,248.5 1913.0,245.8 1912.3,262.5 1904.3,265.5" fill="#8d8d8d"/><polygon points="1891.5,276.0 1900.5,273.8 1913.0,275.8 1904.3,278.5" fill="#a6a6a6"/><polygon points="1891.5,276.0 1904.3,278.5 1904.3,295.5 1892.5,293.0" fill="#bdbdbd"/><polygon points="1904.3,278.5 1913.0,275.8 1912.3,292.5 1904.3,295.5" fill="#5b7c99"/><path d="M1897.5 329V313" stroke="#1a2ea8" stroke-width="1.6"/><polygon points="1897.5,309 1895,314.5 1900,314.5" fill="#1a2ea8"/><path d="M1897.5 329L1906 323" stroke="#3cb44a" stroke-width="1.6"/><polygon points="1909,321 1903.5,321.5 1906,325.5" fill="#3cb44a"/><path d="M1897.5 329L1907 331.5" stroke="#c82a3a" stroke-width="1.6"/><polygon points="1911,332.5 1906,329 1905.5,334" fill="#c82a3a"/><polygon points="1891.5,342.0 1900.5,339.8 1913.0,341.8 1904.3,344.5" fill="#a9a9a9"/><polygon points="1891.5,342.0 1904.3,344.5 1904.3,361.5 1892.5,359.0" fill="#bcbcbc"/><polygon points="1904.3,344.5 1913.0,341.8 1912.3,358.5 1904.3,361.5" fill="#919191"/><g fill="none" stroke="#222" stroke-width="1.1"><path d="M1892 373l9-3 11 2.5-9 3z"/><path d="M1892 373v13l11 3v-14.5M1912 372.5v13l-9 3.5"/><path d="M1901 370v12.5l-9 3.5M1901 382.5l11 3" stroke="#777" stroke-width="0.8"/></g><polygon points="1891,414 1905,412 1913,420 1899,422" fill="#9a9a9a"/><path d="M1901 417L1902.5 404" stroke="#1a2ea8" stroke-width="1.6"/><polygon points="1903,400 1900,406 1905,406.5" fill="#1a2ea8"/><polygon points="1891.5,437.5 1900.5,435.3 1913.0,437.3 1904.3,440.0" fill="#d8d8d8"/><polygon points="1891.5,437.5 1904.3,440.0 1904.3,457.0 1892.5,454.5" fill="#c8c8c8"/><polygon points="1904.3,440.0 1913.0,437.3 1912.3,454.0 1904.3,457.0" fill="#ececec"/><polygon points="1898,438.5 1906,437 1906,453 1898,455" fill="#b8383e"/><g fill="none" stroke="#333" stroke-width="0.9"><path d="M1891.5 437.5l9-2.2 12.5 2-8.7 2.7z"/><path d="M1904.3 440v17M1913 437.3l-.7 16.7-8 3M1891.5 437.5l1 17 11.8 2.5"/></g><polygon points="1912.0,484.2 1911.7,485.9 1908.9,486.5 1908.2,487.7 1909.1,490.4 1907.7,491.5 1905.2,490.2 1904.0,490.6 1902.9,493.3 1901.1,493.3 1900.0,490.6 1898.8,490.2 1896.3,491.5 1894.9,490.4 1895.8,487.7 1895.1,486.5 1892.3,485.9 1892.0,484.2 1894.4,482.6 1894.7,481.3 1892.9,479.1 1893.8,477.6 1896.6,477.9 1897.6,477.1 1897.8,474.2 1899.4,473.6 1901.3,475.7 1902.7,475.7 1904.6,473.6 1906.2,474.2 1906.4,477.1 1907.4,477.9 1910.2,477.6 1911.1,479.1 1909.3,481.3 1909.6,482.6" fill="#5e5e5e"/><circle cx="1902.0" cy="483.3" r="4.5" fill="#f0f0f0"/><polygon points="1891,505 1904,502 1914,504.5 1901,507.5" fill="#c8c8c8"/><polygon points="1891,505 1901,507.5 1901,511 1891,508.5" fill="#a8a8a8"/><polygon points="1901,507.5 1914,504.5 1914,508 1901,511" fill="#999"/><rect x="1892" y="508" width="5" height="14" fill="#b0b0b0"/><rect x="1902" y="510" width="4" height="13" fill="#6a90b0"/><rect x="1908" y="508.5" width="4" height="13" fill="#6a90b0"/></svg>
<!-- status -->
<div class="t" style="left:6px;top:1023px;font-size:12px;letter-spacing:-0.05px">Finished generating support structures.</div>

<!-- taskbar -->
<div class="a" style="left:0;top:1040px;width:1920px;height:40px;background:#2a2624"></div>
<div class="a" style="left:0;top:1040px;width:568px;height:40px;background:#1e2124"></div>
<svg class="a" style="left:0;top:1040px" width="200" height="40">
<path d="M16 12.6l6.8-1v7.2H16zM23.8 11.4l8.2-1.2v8.6h-8.2zM16 19.8h6.8v7.3l-6.8-1zM23.8 19.8H32v8.7l-8.2-1.2z" fill="#fff"/>
<path d="M64.5 12.5h14M64.5 27.5h14M66 14.5h9.5v11H66z" stroke="#fff" stroke-width="1.4" fill="none"/><path d="M78.5 12v16" stroke="#fff" stroke-width="1.4"/><rect x="77" y="17.5" width="3" height="3" fill="#fff"/>
<path d="M111 11h9l2 2h12v16h-23z" fill="#e8b63a"/><path d="M111 14h23v15h-23z" fill="#f6d473"/><path d="M116 29v-7h13v7" stroke="#3a8fc6" stroke-width="3" fill="none"/>
<path d="M160 15h23v18h-23z" fill="#fff"/><path d="M166 15v-3a5.5 5.5 0 0 1 11 0v3" stroke="#fff" stroke-width="1.5" fill="none"/>
<rect x="166" y="20" width="5" height="5" fill="#e0552b"/><rect x="172" y="20" width="5" height="5" fill="#7fb800"/><rect x="166" y="26" width="5" height="5" fill="#1ea4e0"/><rect x="172" y="26" width="5" height="5" fill="#ffbb00"/>
</svg>
<div class="a" style="left:568px;top:1040px;width:160px;height:40px;background:#5a5652"></div>
<div class="a" style="left:568px;top:1077px;width:160px;height:3px;background:#99c9ef"></div>
<svg class="a" style="left:578px;top:1048px" width="22" height="22" viewBox="0 0 14 15">
<rect x="0" y="2.3" width="4.2" height="10.2" rx="2" fill="#d2308c"/><rect x="1" y="3.5" width="1.3" height="8" fill="#f070b0" opacity="0.5"/>
<rect x="9.7" y="2.3" width="4.2" height="10.2" rx="2" fill="#2f8fe0"/><rect x="11.8" y="3.5" width="1.3" height="8" fill="#80c0ff" opacity="0.6"/>
<rect x="4.5" y="0" width="4.8" height="15" rx="2.3" fill="#4cbf4c"/><rect x="6.5" y="1.5" width="1.6" height="12" fill="#90e090" opacity="0.6"/>
</svg><div class="t" style="left:605px;top:1052px;font-size:12px;color:#fff">Simplify3D (Licenc...</div>

<!-- ===== dialog ===== -->
<div id="dlg" class="a" style="left:82px;top:1px;width:1005px;height:695px;background:#f0f0f0;border:1px solid #6f6f6f;box-shadow:4px 6px 14px rgba(0,0,0,0.25)">
</div>
<div class="a" style="left:83px;top:2px;width:1003px;height:30px;background:#fff"></div>
<svg class="a" style="left:92px;top:8px" width="14" height="15" viewBox="0 0 14 15">
<rect x="0" y="2.3" width="4.2" height="10.2" rx="2" fill="#86306a"/><rect x="1" y="3.5" width="1.3" height="8" fill="#c060a0" opacity="0.5"/>
<rect x="9.7" y="2.3" width="4.2" height="10.2" rx="2" fill="#2e6d9c"/><rect x="11.8" y="3.5" width="1.3" height="8" fill="#60a0d0" opacity="0.6"/>
<rect x="4.5" y="0" width="4.8" height="15" rx="2.3" fill="#5a9850"/><rect x="6.5" y="1.5" width="1.6" height="12" fill="#80c070" opacity="0.6"/>
</svg>
<div class="t" style="left:112px;top:9px;font-size:11.5px;letter-spacing:-0.25px">Paramètres FFF</div>
<div class="t" style="left:1013px;top:8px;font-size:13px">?</div>
<svg class="a" style="left:1057px;top:10px" width="12" height="12"><path d="M1 1L11 11M11 1L1 11" stroke="#000" stroke-width="1.2"/></svg>

<div class="t" style="left:93px;top:47px">Nom du procédé :</div>
<div class="inp" style="left:185px;top:43px;width:890px;height:20px"></div>
<div class="t" style="left:187px;top:47px">Process1</div>
<div class="t" style="left:93px;top:73px">Choisir un profil :</div>
<div class="cmb" style="left:185px;top:70px;width:537px;height:20px"></div>
<div class="t" style="left:188px;top:73px">Creality CR-10(3) (modified)</div>
<div class="arr" style="left:708px;top:78px"></div>
<div class="btn" style="left:729px;top:70px;width:107px;height:21px"></div>
<div class="t" style="left:731px;top:73px">Mettre le profil à jour</div>
<div class="btn" style="left:844px;top:70px;width:149px;height:21px"></div>
<div class="t" style="left:846px;top:73px">Sauvegarder comme nouveau</div>
<div class="btn" style="left:1001px;top:70px;width:73px;height:21px"></div>
<div class="t" style="left:1013px;top:73px">Supprimer</div>

<div class="grp" style="left:94px;top:105px;width:488px;height:47px"></div>
<div class="t" style="left:101px;top:98px;background:#f0f0f0;padding:0 1px">Configuration automatique pour le matériau</div>
<div class="cmb" style="left:104px;top:122px;width:410px;height:20px"></div>
<div class="t" style="left:107px;top:125px">PLA</div>
<div class="arr" style="left:500px;top:130px"></div>
<div class="btn pm" style="left:521px;top:122px;width:21px;height:20px"><svg class="a" style="left:3px;top:3px" width="14" height="14"><circle cx="6.8" cy="6.8" r="6.3" fill="#3d9a4c"/><path d="M6.8 3v7.6M3 6.8h7.6" stroke="#c9ffd2" stroke-width="1.8"/></svg></div>
<div class="btn pm" style="left:550px;top:122px;width:21px;height:20px"><svg class="a" style="left:3px;top:3px" width="14" height="14"><circle cx="6.8" cy="6.8" r="6.3" fill="#c9252f"/><path d="M3 6.8h7.6" stroke="#ffc4cb" stroke-width="2"/></svg></div>

<div class="grp" style="left:588px;top:105px;width:487px;height:47px"></div>
<div class="t" style="left:595px;top:98px;background:#f0f0f0;padding:0 1px">Configuration automatique pour qualité d'impression</div>
<div class="cmb" style="left:598px;top:122px;width:409px;height:20px"></div>
<div class="t" style="left:601px;top:125px">High</div>
<div class="arr" style="left:993px;top:130px"></div>
<div class="btn pm" style="left:1014px;top:122px;width:21px;height:20px"><svg class="a" style="left:3px;top:3px" width="14" height="14"><circle cx="6.8" cy="6.8" r="6.3" fill="#3d9a4c"/><path d="M6.8 3v7.6M3 6.8h7.6" stroke="#c9ffd2" stroke-width="1.8"/></svg></div>
<div class="btn pm" style="left:1043px;top:122px;width:21px;height:20px"><svg class="a" style="left:3px;top:3px" width="14" height="14"><circle cx="6.8" cy="6.8" r="6.3" fill="#c9252f"/><path d="M3 6.8h7.6" stroke="#ffc4cb" stroke-width="2"/></svg></div>

<div class="grp" style="left:94px;top:166px;width:981px;height:47px"></div>
<div class="t" style="left:101px;top:159px;background:#f0f0f0;padding:0 1px">Paramètres généraux</div>
<div class="t" style="left:103px;top:187px">Pourcentage de remplissage :</div>
<div class="a" style="left:261px;top:190px;width:506px;height:4px;background:#e7e7e7;border:1px solid #d6d6d6"></div>
<div class="a" style="left:335px;top:182px;width:10px;height:21px;background:#0078d7"></div>
<div class="t" style="left:773px;top:187px">15%</div>
<div class="chk ck" style="left:822px;top:186px"><svg width="13" height="13"><path d="M2.3 6.4L4.9 9.2L10.8 3.3" stroke="#222" stroke-width="1.3" fill="none"/></svg></div>
<div class="t" style="left:839px;top:186px">Inclure le radeau</div>
<div class="chk ck" style="left:952px;top:186px"><svg width="13" height="13"><path d="M2.3 6.4L4.9 9.2L10.8 3.3" stroke="#222" stroke-width="1.3" fill="none"/></svg></div>
<div class="t" style="left:969px;top:186px">Générer le support</div>

<!-- tabs -->
<div class="a" style="left:104px;top:249px;width:960px;height:396px;background:#fff;border:1px solid #d9d9d9"></div>
<div class="a" style="left:105px;top:232px;width:77px;height:18px;background:#f0f0f0;border:1px solid #d9d9d9;border-bottom:none"></div><div class="t" style="left:105px;top:234px;width:77px;text-align:center">Extrudeuse</div>
<div class="a" style="left:181px;top:232px;width:61px;height:18px;background:#f0f0f0;border:1px solid #d9d9d9;border-bottom:none"></div><div class="t" style="left:181px;top:234px;width:61px;text-align:center">Couche</div>
<div class="a" style="left:241px;top:232px;width:68px;height:18px;background:#f0f0f0;border:1px solid #d9d9d9;border-bottom:none"></div><div class="t" style="left:241px;top:234px;width:68px;text-align:center">Additions</div>
<div class="a" style="left:308px;top:229px;width:87px;height:21px;background:#fff;border:1px solid #d9d9d9;border-bottom:none"></div><div class="t" style="left:308px;top:233px;width:87px;text-align:center">Remplissage</div>
<div class="a" style="left:394px;top:232px;width:61px;height:18px;background:#f0f0f0;border:1px solid #d9d9d9;border-bottom:none"></div><div class="t" style="left:394px;top:234px;width:61px;text-align:center">Support</div>
<div class="a" style="left:454px;top:232px;width:87px;height:18px;background:#f0f0f0;border:1px solid #d9d9d9;border-bottom:none"></div><div class="t" style="left:454px;top:234px;width:87px;text-align:center">Température</div>
<div class="a" style="left:540px;top:232px;width:102px;height:18px;background:#f0f0f0;border:1px solid #d9d9d9;border-bottom:none"></div><div class="t" style="left:540px;top:234px;width:102px;text-align:center">Refroidissement</div>
<div class="a" style="left:641px;top:232px;width:61px;height:18px;background:#f0f0f0;border:1px solid #d9d9d9;border-bottom:none"></div><div class="t" style="left:641px;top:234px;width:61px;text-align:center">G-Code</div>
<div class="a" style="left:701px;top:232px;width:57px;height:18px;background:#f0f0f0;border:1px solid #d9d9d9;border-bottom:none"></div><div class="t" style="left:701px;top:234px;width:57px;text-align:center">Scripts</div>
<div class="a" style="left:757px;top:232px;width:64px;height:18px;background:#f0f0f0;border:1px solid #d9d9d9;border-bottom:none"></div><div class="t" style="left:757px;top:234px;width:64px;text-align:center">Vitesses</div>
<div class="a" style="left:820px;top:232px;width:52px;height:18px;background:#f0f0f0;border:1px solid #d9d9d9;border-bottom:none"></div><div class="t" style="left:820px;top:234px;width:52px;text-align:center">Autre</div>
<div class="a" style="left:871px;top:232px;width:65px;height:18px;background:#f0f0f0;border:1px solid #d9d9d9;border-bottom:none"></div><div class="t" style="left:871px;top:234px;width:65px;text-align:center">Avancés</div>


<!-- General group -->
<div class="grp" style="left:253px;top:266px;width:318px;height:253px"></div>
<div class="t" style="left:260px;top:259px;background:#fff;padding:0 1px">Général</div>
<div class="t" style="left:262px;top:287px">Extrudeuse de remplissage</div>
<div class="cmb" style="left:398px;top:283px;width:140px;height:20px"></div>
<div class="t" style="left:401px;top:287px">Primary Extruder</div>
<div class="arr" style="left:524px;top:291px"></div>
<div class="t" style="left:262px;top:313px">Motif de remplissage interne</div>
<div class="cmb" style="left:408px;top:310px;width:153px;height:19px"></div>
<div class="t" style="left:411px;top:313px">Rectilinear</div>
<div class="arr" style="left:547px;top:317px"></div>
<div class="t" style="left:262px;top:339px">Motif de remplissage externe</div>
<div class="cmb" style="left:408px;top:336px;width:153px;height:19px"></div>
<div class="t" style="left:411px;top:339px">Rectilinear</div>
<div class="arr" style="left:547px;top:343px"></div>
<div class="t" style="left:262px;top:365px">Pourcentage de remplissage interne</div><div class="spin" style="left:447px;top:362px;width:59px;height:20px"><div class="ud"><i></i></div></div><div class="t" style="left:450px;top:365px">15</div><div class="t" style="left:511px;top:365px">%</div>
<div class="t" style="left:262px;top:391px">Chevauchement du contour</div><div class="spin" style="left:447px;top:388px;width:59px;height:20px"><div class="ud"><i></i></div></div><div class="t" style="left:450px;top:391px">15</div><div class="t" style="left:511px;top:391px">%</div>
<div class="t" style="left:262px;top:417px">Largeur de l'extrusion du remplissage</div><div class="spin" style="left:447px;top:414px;width:59px;height:20px"><div class="ud"><i></i></div></div><div class="t" style="left:450px;top:417px">100</div><div class="t" style="left:511px;top:417px">%</div>
<div class="t" style="left:262px;top:443px">Longueur minimale du remplissage</div><div class="spin" style="left:447px;top:440px;width:59px;height:20px"><div class="ud"><i></i></div></div><div class="t" style="left:450px;top:443px">5,00</div><div class="t" style="left:511px;top:443px">mm</div>
<div class="t" style="left:262px;top:469px">Combiner les remplissages tout les</div><div class="spin" style="left:447px;top:466px;width:59px;height:20px"><div class="ud"><i></i></div></div><div class="t" style="left:450px;top:469px">1</div><div class="t" style="left:511px;top:469px">couches</div>

<div class="chk" style="left:263px;top:495px"></div>
<div class="t" style="left:280px;top:494px">Inclut un diaphragme solide chaque</div>
<div class="spin dis" style="left:461px;top:492px;width:55px;height:19px;background:#f0f0f0;border-color:#cfcfcf"><div class="ud" style="border-color:#dadada;background:#efefef"><i style="background:#dadada"></i></div></div>
<div class="t" style="left:464px;top:495px;color:#999">20</div>
<div class="t" style="left:522px;top:495px">couches</div>

<!-- angles groups -->
<div class="grp" style="left:590px;top:267px;width:323px;height:126px"></div>
<div class="t" style="left:598px;top:260px;background:#fff;padding:0 1px">Angles de remplissage interne</div>
<div class="spin" style="left:600px;top:283px;width:47px;height:20px"><div class="ud"><i></i></div></div>
<div class="t" style="left:603px;top:287px">0</div>
<div class="t" style="left:652px;top:287px">deg</div>
<div class="lb" style="left:701px;top:283px;width:202px;height:78px;border-color:#7a7a7a"></div>
<div class="t" style="left:706px;top:287px">45</div>
<div class="t" style="left:706px;top:304px">-45</div>
<div class="btn" style="left:601px;top:310px;width:93px;height:21px"></div>
<div class="t" style="left:606px;top:314px">Ajouter un angle</div>
<div class="btn" style="left:601px;top:339px;width:93px;height:21px"></div>
<div class="t" style="left:606px;top:343px">Supprimer l'angle</div>
<div class="chk" style="left:600px;top:369px"></div>
<div class="t" style="left:617px;top:369px">Imprimer chaque angle de remplissage sur chaque couche.</div>

<div class="grp" style="left:590px;top:417px;width:323px;height:102px"></div>
<div class="t" style="left:598px;top:410px;background:#fff;padding:0 1px">Angles de remplissage externe</div>
<div class="spin" style="left:600px;top:433px;width:47px;height:20px"><div class="ud"><i></i></div></div>
<div class="t" style="left:603px;top:437px">0</div>
<div class="t" style="left:652px;top:437px">deg</div>
<div class="lb" style="left:695px;top:433px;width:208px;height:78px;border-color:#7a7a7a"></div>
<div class="t" style="left:700px;top:437px">45</div>
<div class="t" style="left:700px;top:454px">-45</div>
<div class="btn" style="left:601px;top:460px;width:87px;height:21px"></div>
<div class="t" style="left:604px;top:464px">Ajouter un angle</div>
<div class="btn" style="left:601px;top:489px;width:87px;height:21px"></div>
<div class="t" style="left:603px;top:493px">Supprimer l'angle</div>

<!-- bottom buttons -->
<div class="btn" style="left:95px;top:662px;width:118px;height:21px"></div>
<div class="t" style="left:103px;top:666px">Masquer les avancés</div>
<div class="btn" style="left:221px;top:662px;width:139px;height:21px"></div>
<div class="t" style="left:229px;top:666px">Sélectionner des modèles</div>
<div class="btn" style="left:920px;top:662px;width:73px;height:21px;border:2px solid #25639a;background:#e1e1e1;box-shadow:inset 0 0 0 1px #d4ecff"></div>
<div class="t" style="left:934px;top:666px">D'accord</div>
<div class="btn" style="left:1001px;top:662px;width:73px;height:21px"></div>
<div class="t" style="left:1018px;top:666px">Annuler</div>

</body></html>
